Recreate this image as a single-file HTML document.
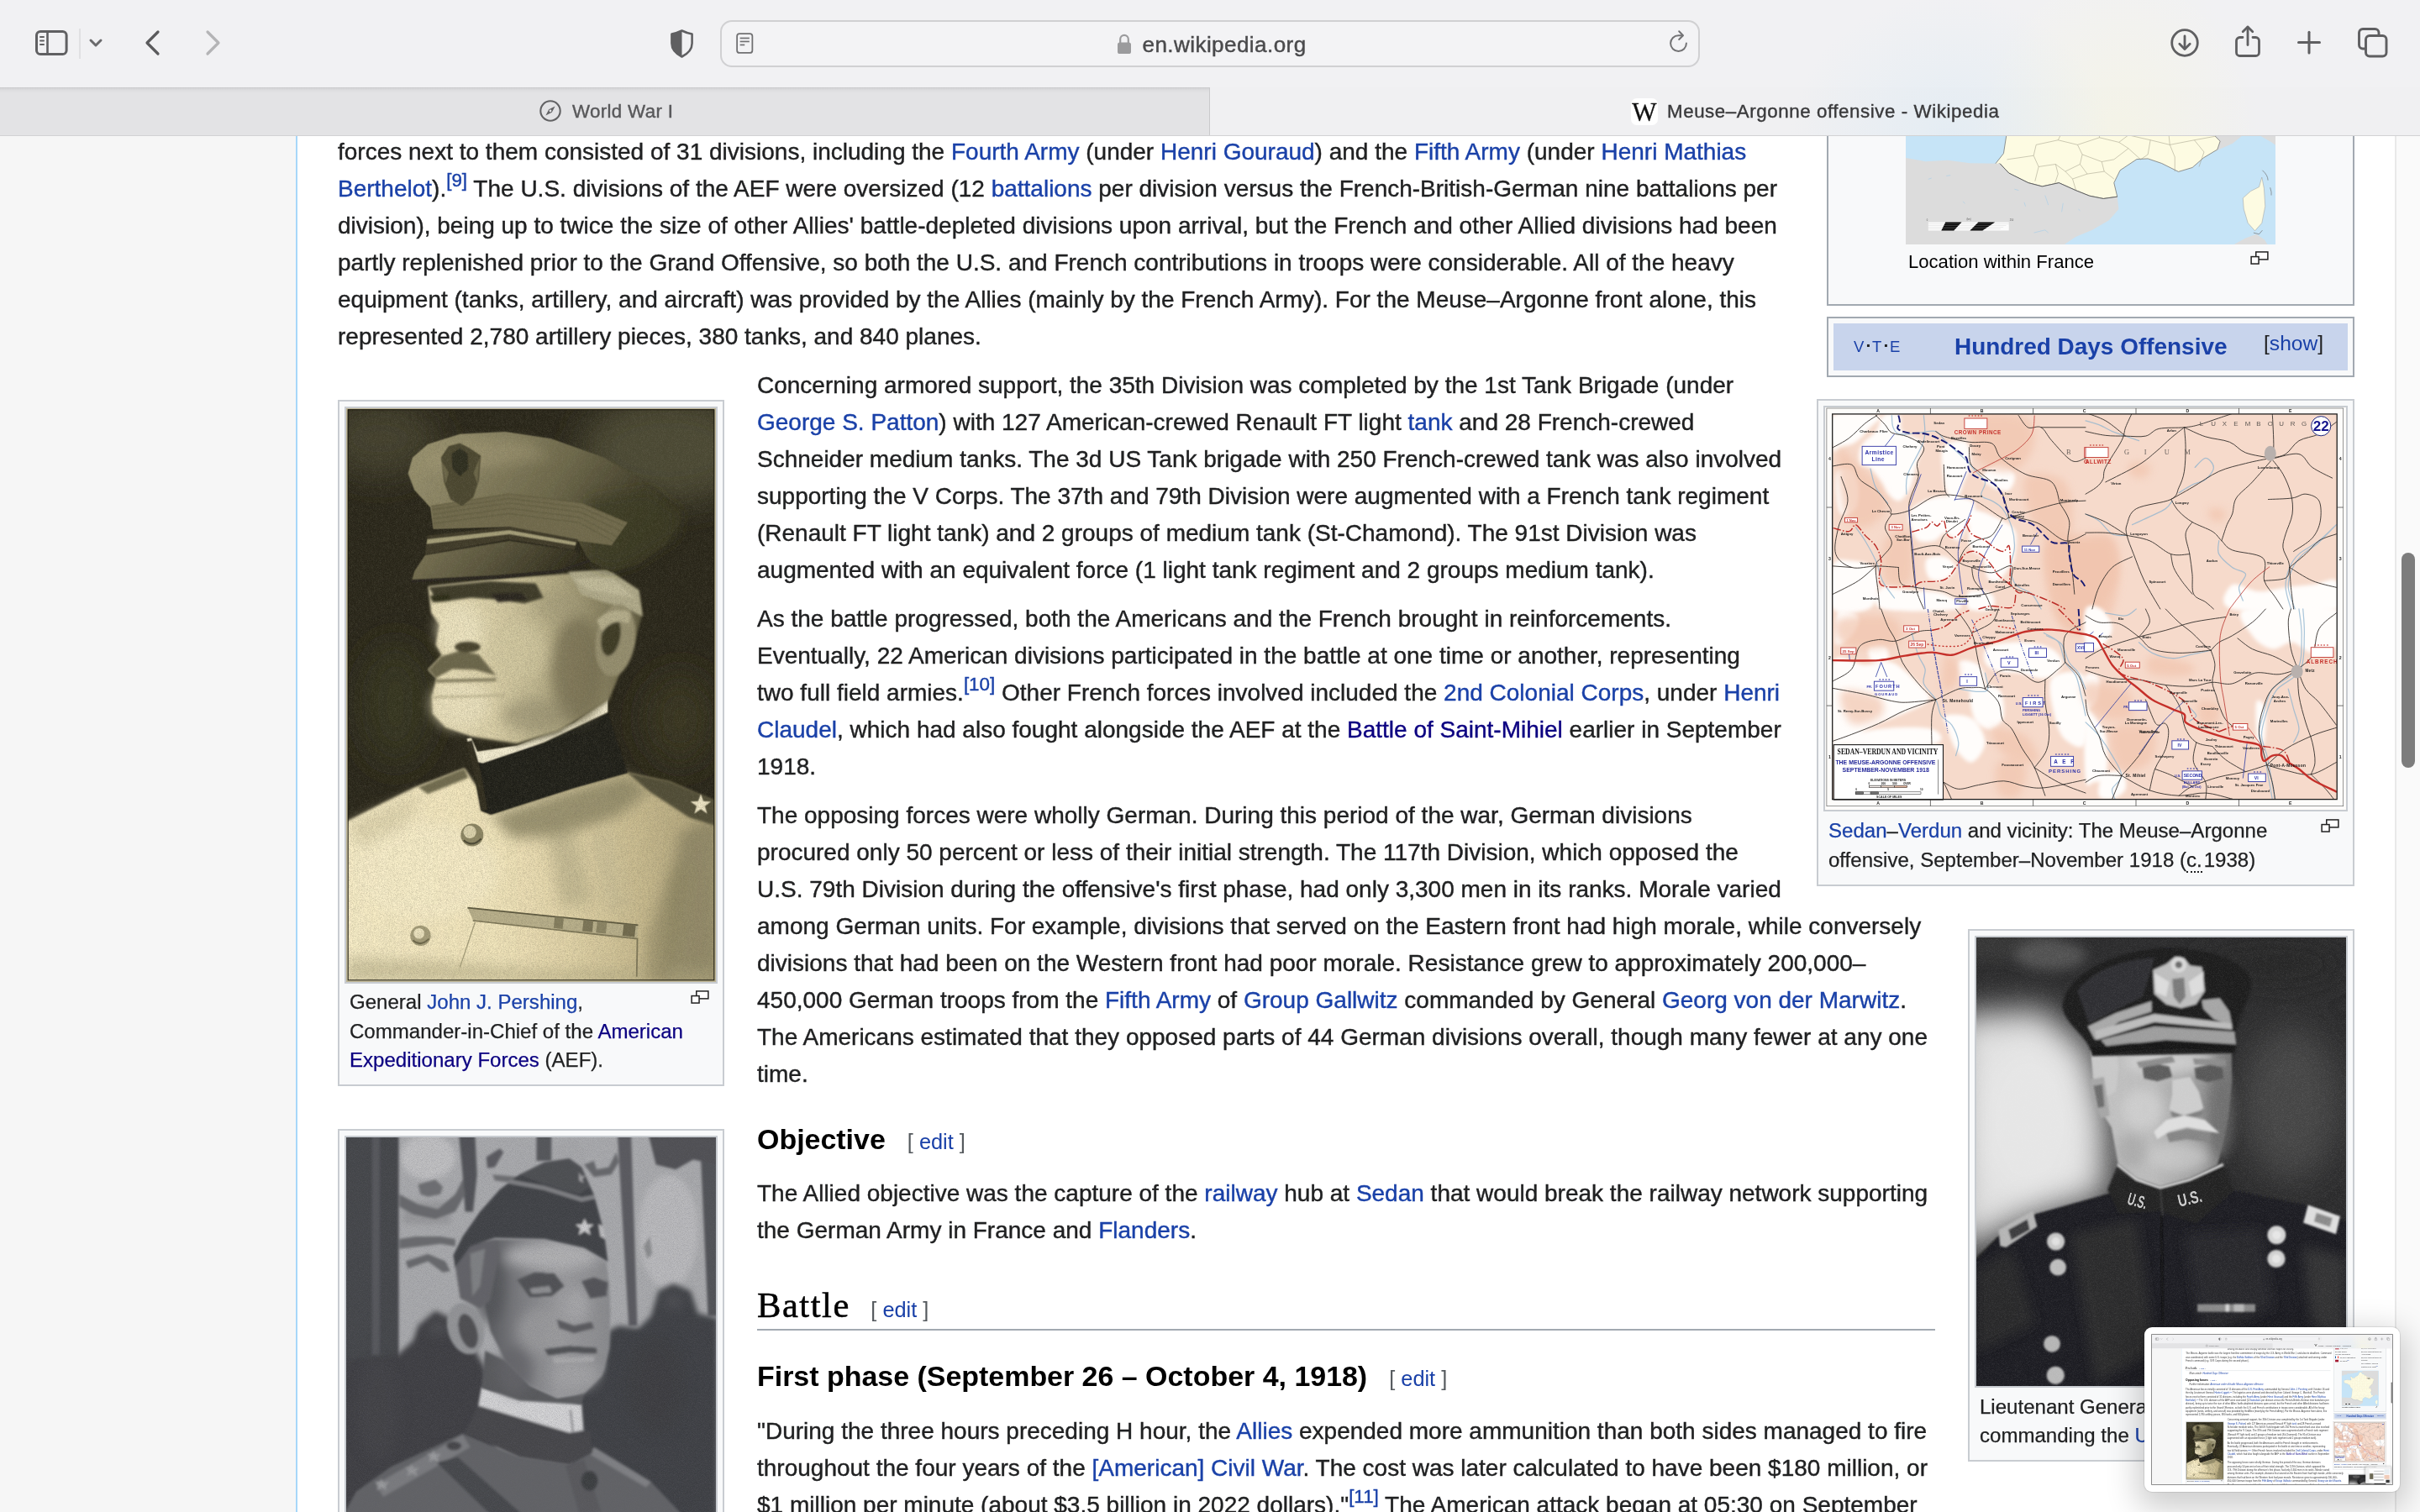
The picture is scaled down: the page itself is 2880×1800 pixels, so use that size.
<!DOCTYPE html>
<html lang="en"><head><meta charset="utf-8"><title>Meuse–Argonne offensive - Wikipedia</title>
<style>
*{box-sizing:border-box}
html,body{margin:0;padding:0}
body{width:2880px;height:1800px;overflow:hidden;position:relative;background:#fff;font-family:"Liberation Sans",Arial,Helvetica,sans-serif;color:#202122;-webkit-font-smoothing:antialiased}
a{color:#1a41a8;text-decoration:none}
a.v{color:#0b0080}
.abs{position:absolute}
/* ---------- browser chrome ---------- */
.toolbar{will-change:transform;position:absolute;left:0;top:0;width:2880px;height:104px;background:radial-gradient(ellipse 190px 170px at 2320px 165px,rgba(200,228,246,.3),rgba(200,228,246,0) 100%),radial-gradient(ellipse 170px 210px at 2520px 165px,rgba(250,248,215,.42),rgba(250,248,215,0) 100%),#f1f1f3;z-index:20}
.tabbar{will-change:transform;position:absolute;left:0;top:104px;width:2880px;height:58px;background:radial-gradient(ellipse 190px 170px at 2320px 61px,rgba(200,228,246,.3),rgba(200,228,246,0) 100%),radial-gradient(ellipse 170px 210px at 2520px 61px,rgba(250,248,215,.42),rgba(250,248,215,0) 100%),#f0f0f2;z-index:20;border-bottom:1px solid #d2d2d4}
.tab1{position:absolute;left:0;top:0;width:1440px;height:57px;background:linear-gradient(#c6c6c8 0,#d6d6d8 1.5px,#dfdfe1 4px,#e3e3e5 7px);border-right:1px solid #cacacc}
.tabtxt{position:absolute;font-size:22.3px;line-height:30px;white-space:nowrap;-webkit-text-stroke:.4px}
.url{position:absolute;left:857px;top:24px;width:1166px;height:56px;border:2px solid #d0d0d2;border-radius:14px;background:#f3f3f5}
.urltxt{position:absolute;left:1359.5px;top:35.2px;font-size:26px;line-height:36px;color:#4a4a4c;white-space:nowrap;letter-spacing:.45px;-webkit-text-stroke:.45px}
.ic{position:absolute;overflow:visible}
/* ---------- page ---------- */
.page{will-change:transform;position:absolute;left:0;top:0;width:2880px;height:1800px;overflow:hidden;background:#fff}
.leftpanel{position:absolute;left:0;top:-1000px;width:352px;height:4000px;background:#f6f6f6}
.leftline{position:absolute;left:352px;top:-1000px;width:2px;height:4000px;background:#a7d7f9}
.sbtrack{position:absolute;left:2850px;top:-1000px;width:30px;height:4000px;background:#fafafa;border-left:2px solid #e9e9e9}
.sbthumb{position:absolute;left:2858px;width:16px;height:256px;border-radius:8px;background:#7d7d7d}
.p{margin-top:3px;position:absolute;font-size:28px;line-height:44px;white-space:nowrap;color:#202122;-webkit-text-stroke:.4px}
.p sup{font-size:22.4px;line-height:1;vertical-align:baseline;position:relative;top:-12px}
.cap{-webkit-text-stroke:.25px;position:absolute;font-size:24.06px;line-height:34.6px;white-space:nowrap;color:#202122}
.thumb{position:absolute;background:#f8f9fa;border:2px solid #c8ccd1}
.img{position:absolute;border:2px solid #c8ccd1;overflow:hidden}
.img svg{position:absolute;left:0;top:0;display:block}
.h3{position:absolute;font-size:33.95px;font-weight:bold;line-height:54px;color:#000;white-space:nowrap}
.h2{position:absolute;font-family:"Liberation Serif","DejaVu Serif",serif;font-size:42.5px;line-height:55px;color:#000;white-space:nowrap;letter-spacing:1.55px;-webkit-text-stroke:.55px #000}
.ed{font-family:"Liberation Sans",Arial,sans-serif;font-weight:normal;font-size:25.35px;color:#54595d;margin-left:26px;letter-spacing:0;-webkit-text-stroke:0;position:relative;top:-.5px}
.mag{position:absolute;width:22px;height:16px}
.h2 .ed{margin-left:24.5px}
.view{position:absolute;left:0;top:0;width:2880px;height:1800px;overflow:hidden;background:#fff}
.doc{position:absolute;left:0;width:2880px;height:0}
.preview{position:absolute;left:2552px;top:1580px;width:304px;height:196px;background:#fff;border-radius:9px;box-shadow:0 0 1px 1px rgba(0,0,0,.10),0 12px 38px 8px rgba(0,0,0,.2);z-index:30}
.pvin{position:absolute;left:8.6px;top:8.6px;width:286.8px;height:178.4px;overflow:hidden;box-shadow:0 0 0 .8px #707070}
.pvin .view{transform:scale(.09958);transform-origin:0 0}
.npv{position:absolute;left:2552px;top:1580px;width:304px;height:196px;background:#fff;border-radius:9px;box-shadow:0 0 30px rgba(0,0,0,.3);z-index:30;overflow:hidden}
.p .ln{display:block}
.cap .ln{display:block}
.pvin .p,.pvin .cap,.pvin .tabtxt,.pvin .urltxt,.pvin .h2{-webkit-text-stroke:0}
.pvin .p,.pvin .cap{color:#3a3a3c}
</style></head>
<body>
<div class="page view">
<div class="doc" style="top:0">
<div class="leftpanel"></div><div class="leftline"></div>
<div class="sbtrack"></div>

<!-- infobox -->
<div class="abs" style="left:2174px;top:-700px;width:628px;height:1064px;background:#f8f9fa;border:2px solid #a2a9b1"></div>
<div class="abs" style="left:2268px;top:-130px;width:440px;height:421px;overflow:hidden;background:#c6e4f6"><svg width="440" height="421" viewBox="569 -847 1330 1274" preserveAspectRatio="none" style="position:absolute;left:0;top:0"><g id="A_france">
<defs><clipPath id="frclip"><path d="M1260,-796 L1200,-780 L1178,-701 L1135,-659 L1058,-629 L1050,-598 L1015,-580 L947,-586 L929,-629 L878,-629 L904,-568 L912,-501 L869,-501 L784,-519 L698,-507 L633,-471 L672,-434 L646,-422 L672,-398 L749,-386 L826,-337 L861,-325 L869,-277 L912,-216 L947,-192 L947,-131 L938,-10 L921,99 L888,141 L908,136 L940,170 L1010,205 L1060,218 L1120,205 L1180,232 L1230,252 L1280,262 L1330,255 L1318,205 L1340,160 L1400,120 L1440,118 L1490,135 L1550,165 L1600,150 L1640,115 L1690,85 L1700,55 L1680,35 L1642,27 L1633,-22 L1612,-70 L1642,-119 L1624,-168 L1624,-228 L1564,-204 L1564,-246 L1633,-337 L1689,-368 L1693,-434 L1745,-538 L1676,-562 L1590,-598 L1539,-610 L1457,-641 L1457,-683 L1401,-663 L1397,-701 L1316,-726 L1290,-756 L1260,-796 Z"/></clipPath></defs>
<rect x="569" y="-847" width="1330" height="1274" fill="#c6e4f7"/>
<path d="M569,-671 L612,-665 L689,-707 L741,-695 L784,-750 L835,-732 L929,-738 L1032,-762 L1118,-774 L1161,-805 L1161,-847 L569,-847 Z" fill="#dcdcdc"/>
<path d="M1260,-796 L1324,-829 L1350,-847 L1899,-847 L1899,69 L1882,57 L1805,14 L1745,63 L1684,90 L1680,35 L1500,-300 L1400,-700 Z" fill="#dcdcdc"/>
<path d="M1260,-796 L1200,-780 L1178,-701 L1135,-659 L1058,-629 L1050,-598 L1015,-580 L947,-586 L929,-629 L878,-629 L904,-568 L912,-501 L869,-501 L784,-519 L698,-507 L633,-471 L672,-434 L646,-422 L672,-398 L749,-386 L826,-337 L861,-325 L869,-277 L912,-216 L947,-192 L947,-131 L938,-10 L921,99 L888,141 L908,136 L940,170 L1010,205 L1060,218 L1120,205 L1180,232 L1230,252 L1280,262 L1330,255 L1318,205 L1340,160 L1400,120 L1440,118 L1490,135 L1550,165 L1600,150 L1640,115 L1690,85 L1700,55 L1680,35 L1642,27 L1633,-22 L1612,-70 L1642,-119 L1624,-168 L1624,-228 L1564,-204 L1564,-246 L1633,-337 L1689,-368 L1693,-434 L1745,-538 L1676,-562 L1590,-598 L1539,-610 L1457,-641 L1457,-683 L1401,-663 L1397,-701 L1316,-726 L1290,-756 L1260,-796 Z" fill="#fdfbe2" stroke="#6d6d6d" stroke-width="2.2" stroke-linejoin="round"/>
<g clip-path="url(#frclip)" fill="none" stroke="#b5b19c" stroke-width="1.6"><path d="M648,-641 L695,-644 L729,-659 L794,-683 L833,-648 L870,-651 L904,-641 L948,-691 L1006,-684 L1049,-646 L1079,-673 L1133,-687 L1179,-640 L1215,-675 L1256,-645 L1298,-640 L1352,-687 L1385,-653 L1438,-669 L1480,-686 L1513,-660 L1558,-661 L1590,-653 L1650,-637 L1673,-673 L1722,-667"/><path d="M654,-558 L711,-549 L738,-550 L787,-554 L823,-583 L865,-571 L923,-544 L944,-551 L1005,-575 L1034,-558 L1076,-565 L1115,-580 L1180,-596 L1219,-596 L1243,-555 L1310,-585 L1339,-595 L1387,-587 L1422,-549 L1469,-546 L1510,-596 L1551,-538 L1587,-548 L1649,-560 L1679,-543 L1740,-563"/><path d="M647,-444 L686,-451 L745,-450 L772,-470 L820,-501 L860,-473 L919,-465 L968,-470 L991,-465 L1029,-466 L1077,-494 L1135,-471 L1158,-456 L1206,-453 L1249,-493 L1289,-444 L1352,-475 L1397,-465 L1437,-480 L1477,-486 L1513,-446 L1548,-494 L1609,-497 L1637,-480 L1692,-480 L1735,-473"/><path d="M659,-385 L692,-399 L752,-348 L796,-402 L831,-346 L880,-351 L924,-384 L944,-354 L1002,-378 L1047,-400 L1077,-344 L1138,-344 L1179,-350 L1221,-391 L1265,-377 L1308,-356 L1346,-364 L1394,-390 L1426,-375 L1458,-346 L1515,-373 L1565,-380 L1589,-365 L1648,-375 L1672,-394 L1736,-349"/><path d="M656,-270 L705,-265 L734,-276 L796,-252 L816,-284 L879,-277 L911,-298 L962,-250 L1008,-258 L1036,-297 L1082,-295 L1118,-299 L1161,-255 L1212,-267 L1257,-301 L1304,-247 L1336,-279 L1384,-290 L1427,-251 L1463,-298 L1509,-293 L1568,-284 L1603,-283 L1637,-302 L1684,-302 L1722,-299"/><path d="M662,-187 L696,-158 L748,-171 L788,-157 L816,-158 L877,-160 L923,-172 L957,-171 L1001,-155 L1038,-206 L1076,-189 L1122,-168 L1157,-151 L1224,-200 L1263,-198 L1310,-159 L1343,-179 L1386,-206 L1434,-208 L1460,-189 L1517,-195 L1559,-200 L1594,-206 L1639,-186 L1695,-192 L1722,-163"/><path d="M650,-90 L710,-107 L738,-77 L792,-69 L824,-53 L861,-85 L917,-90 L952,-110 L1001,-62 L1030,-111 L1096,-108 L1129,-71 L1159,-68 L1205,-109 L1266,-99 L1289,-67 L1336,-110 L1375,-100 L1432,-85 L1482,-68 L1513,-62 L1545,-54 L1594,-60 L1630,-112 L1679,-106 L1733,-97"/><path d="M792,-786 L807,-726 L803,-665 L795,-604 L787,-544 L793,-483 L795,-422 L786,-362 L784,-301 L766,-240 L801,-180 L783,-119"/><path d="M847,-786 L852,-726 L889,-665 L857,-604 L864,-544 L879,-483 L888,-422 L860,-362 L863,-301 L865,-240 L845,-180 L889,-119"/><path d="M930,-786 L979,-726 L937,-665 L937,-604 L973,-544 L972,-483 L941,-422 L958,-362 L954,-301 L966,-240 L939,-180 L972,-119"/><path d="M1066,-786 L1052,-726 L1063,-665 L1063,-604 L1035,-544 L1059,-483 L1058,-422 L1045,-362 L1021,-301 L1047,-240 L1062,-180 L1031,-119"/><path d="M1134,-786 L1147,-726 L1132,-665 L1103,-604 L1134,-544 L1114,-483 L1145,-422 L1135,-362 L1117,-301 L1147,-240 L1133,-180 L1118,-119"/><path d="M1230,-786 L1233,-726 L1233,-665 L1232,-604 L1221,-544 L1223,-483 L1218,-422 L1214,-362 L1238,-301 L1205,-240 L1191,-180 L1224,-119"/><path d="M1298,-786 L1301,-726 L1303,-665 L1285,-604 L1283,-544 L1276,-483 L1313,-422 L1319,-362 L1308,-301 L1279,-240 L1323,-180 L1315,-119"/><path d="M1385,-786 L1358,-726 L1402,-665 L1391,-604 L1390,-544 L1359,-483 L1396,-422 L1360,-362 L1383,-301 L1366,-240 L1377,-180 L1404,-119"/><path d="M1483,-786 L1486,-726 L1460,-665 L1464,-604 L1475,-544 L1446,-483 L1465,-422 L1494,-362 L1483,-301 L1489,-240 L1460,-180 L1480,-119"/><path d="M1571,-786 L1566,-726 L1553,-665 L1539,-604 L1531,-544 L1576,-483 L1578,-422 L1544,-362 L1569,-301 L1551,-240 L1562,-180 L1573,-119"/><path d="M1632,-786 L1648,-726 L1629,-665 L1642,-604 L1617,-544 L1629,-483 L1631,-422 L1663,-362 L1623,-301 L1655,-240 L1620,-180 L1667,-119"/></g>
<g fill="none" stroke="#a09c88" stroke-width="1.6" stroke-linejoin="round"><polyline points="933,121 1029,107 1047,147 1034,199"/><polyline points="1029,107 1038,68 1117,51 1126,33 1121,-37"/><polyline points="1047,147 1108,138 1117,173 1104,212"/><polyline points="1117,51 1187,68 1204,103 1196,138 1143,164 1108,138"/><polyline points="1187,68 1266,42 1336,59 1370,33 1379,-28"/><polyline points="1204,103 1274,129 1318,121 1370,81 1336,59"/><polyline points="1196,138 1222,173 1283,164 1274,129"/><polyline points="1143,164 1169,191 1222,173"/><polyline points="1169,191 1182,234"/><polyline points="1283,164 1318,191"/><polyline points="1370,81 1414,121"/><polyline points="1370,33 1449,51 1440,103 1414,121"/><polyline points="1449,51 1519,68 1537,112 1537,164"/><polyline points="1519,68 1607,51 1642,94 1624,147"/><polyline points="1607,51 1685,37"/><polyline points="1266,42 1257,-28"/><polyline points="1519,68 1510,-20"/></g>
<!-- Spain / Andorra -->
<path d="M569,115 L640,128 L720,124 L800,134 L908,136 L940,170 L1010,205 L1060,218 L1120,205 L1180,232 L1230,252 L1280,262 L1330,255 L1335,300 L1300,340 L1240,375 L1180,400 L1140,427 L569,427 Z" fill="#dcdcdc"/>
<path d="M908,136 L940,170 L1010,205 L1060,218 L1120,205 L1180,232 L1230,252 L1280,262 L1330,255" fill="none" stroke="#5f5f5f" stroke-width="3"/>
<path d="M1750,427 L1790,405 L1830,390 L1860,410 L1870,427 Z" fill="#dcdcdc"/>
<path d="M1850,185 L1858,225 L1862,290 L1850,350 L1825,378 L1800,350 L1785,300 L1782,260 L1810,235 L1840,220 Z" fill="#fdfbe2" stroke="#9a9a9a" stroke-width="1.5"/>
<path d="M1852,160 Q1872,178 1872,196 M1880,222 Q1886,240 1884,250 M1820,385 L1840,390 L1852,376" fill="none" stroke="#6d6d6d" stroke-width="2"/>
<g fill="none" stroke="#a9cfe8" stroke-width="2"><polyline points="650,192 662,188"/><polyline points="715,180 730,178"/><polyline points="960,228 975,232"/><polyline points="1070,250 1082,285"/><polyline points="1135,278 1130,310"/><polyline points="995,275 1000,290"/><polyline points="1030,385 1070,375 1082,385"/><polyline points="1190,300 1196,305"/><polyline points="775,272 782,280"/></g>
<g>
 <rect x="650" y="347" width="290" height="30" fill="#fff" opacity=".9"/>
 <polygon points="712,347 770,347 742,377 697,377" fill="#000"/>
 <polygon points="830,347 890,347 845,377 800,377" fill="#000"/>
 <g stroke="#c9c9c9" stroke-width="1"><line x1="650" y1="353" x2="940" y2="353"/><line x1="650" y1="359" x2="930" y2="359"/><line x1="650" y1="365" x2="920" y2="365"/><line x1="650" y1="371" x2="910" y2="371"/></g>
 <g font-family="'Liberation Sans',sans-serif" font-size="8" fill="#555"><text x="644" y="342">0</text><text x="788" y="339">(km)</text><text x="943" y="342">250</text></g>
</g>
<!-- location marker + label -->
<circle cx="1479" cy="-580" r="9" fill="#d33"/>
<text x="1493" y="-574" font-family="'Liberation Sans',sans-serif" font-size="30" fill="#222">Meuse-</text>
<text x="1493" y="-540" font-family="'Liberation Sans',sans-serif" font-size="30" fill="#222">Argonne</text>
</g></svg></div>
<div class="abs" style="left:2271px;top:295px;font-size:22.1px;line-height:34px;color:#000;white-space:nowrap">Location within France</div>
<svg class="mag" style="left:2678px;top:299px" viewBox="0 0 23 17"><rect x="7" y="1" width="15" height="9.5" fill="#fff" stroke="#222" stroke-width="1.6"/><rect x="1" y="7" width="9.5" height="9" fill="#fff" stroke="#222" stroke-width="1.6"/></svg>

<!-- navbox -->
<div class="abs" style="left:2174px;top:377px;width:628px;height:72px;background:#f8f9fa;border:2px solid #a2a9b1"></div>
<div class="abs" style="left:2182px;top:385px;width:612px;height:56px;background:#c8d4ec"></div>
<div class="abs" style="left:2206px;top:399px;font-size:18.5px;line-height:26px;white-space:nowrap;letter-spacing:2.2px;color:#202122"><a>V</a><b style="font-size:21px;position:relative;top:-1.5px;letter-spacing:.5px">·</b><a>T</a><b style="font-size:21px;position:relative;top:-1.5px;letter-spacing:.5px">·</b><a>E</a></div>
<div class="abs" style="left:2326px;top:393.4px;font-size:27.95px;font-weight:bold;line-height:40px;white-space:nowrap"><a>Hundred Days Offensive</a></div>
<div class="abs" style="left:2694px;top:391px;font-size:24.64px;line-height:36px;white-space:nowrap;color:#202122">[<a>show</a>]</div>

<!-- paragraph 1 -->
<div class="p" style="left:402px;top:68px"><span class="ln">The American forces initially consisted of 15 divisions of the <a>U.S. First Army</a> commanded by General <a>John J. Pershing</a> until October 16 and</span><span class="ln">then by Lieutenant General <a>Hunter Liggett</a>.<sup><a>[8]</a></sup> The logistics were planned and directed by then Colonel George C. Marshall. The French</span><span class="ln">forces next to them consisted of 31 divisions, including the <a>Fourth Army</a> (under <a>Henri Gouraud</a>) and the <a>Fifth Army</a> (under <a>Henri Mathias</a></span><span class="ln"><a>Berthelot</a>).<sup><a>[9]</a></sup> The U.S. divisions of the AEF were oversized (12 <a>battalions</a> per division versus the French-British-German nine battalions per</span><span class="ln">division), being up to twice the size of other Allies' battle-depleted divisions upon arrival, but the French and other Allied divisions had been</span><span class="ln">partly replenished prior to the Grand Offensive, so both the U.S. and French contributions in troops were considerable. All of the heavy</span><span class="ln">equipment (tanks, artillery, and aircraft) was provided by the Allies (mainly by the French Army). For the Meuse–Argonne front alone, this</span><span class="ln">represented 2,780 artillery pieces, 380 tanks, and 840 planes.</span></div>

<!-- thumb 1 : Pershing -->
<div class="thumb" style="left:402px;top:476px;width:460px;height:817px"></div>
<div class="img" style="left:410px;top:484px;width:444px;height:687px;background:#3b3a2b"><svg width="440" height="683" viewBox="0 0 975 1514" preserveAspectRatio="none"><g id="A_pershing">
<defs>
<filter id="pb1" x="-30%" y="-30%" width="160%" height="160%"><feGaussianBlur stdDeviation="16"/></filter>
<filter id="pb2" x="-30%" y="-30%" width="160%" height="160%"><feGaussianBlur stdDeviation="7"/></filter>
<filter id="pb3" x="-30%" y="-30%" width="160%" height="160%"><feGaussianBlur stdDeviation="3"/></filter>
<filter id="pb4" x="-30%" y="-30%" width="160%" height="160%"><feGaussianBlur stdDeviation="1.4"/></filter>
<filter id="pbig" x="-50%" y="-50%" width="200%" height="200%"><feGaussianBlur stdDeviation="45"/></filter>
<filter id="pgrain" x="0" y="0" width="100%" height="100%"><feTurbulence type="fractalNoise" baseFrequency="0.85" numOctaves="2" seed="3" result="n"/><feColorMatrix in="n" type="matrix" values="0 0 0 0 0.12  0 0 0 0 0.11  0 0 0 0 0.07  1.6 1.6 1.6 0 -2.0"/></filter>
<filter id="pgrain2" x="0" y="0" width="100%" height="100%"><feTurbulence type="fractalNoise" baseFrequency="0.85" numOctaves="2" seed="11" result="n"/><feColorMatrix in="n" type="matrix" values="0 0 0 0 0.98  0 0 0 0 0.95  0 0 0 0 0.8  1.6 1.6 1.6 0 -2.05"/></filter>
<clipPath id="pclip"><rect x="4" y="3" width="967" height="1507"/></clipPath>
<linearGradient id="puni" x1="0" y1="0" x2="1" y2="0"><stop offset="0" stop-color="#f8edc8"/><stop offset=".42" stop-color="#f2e5bb"/><stop offset=".62" stop-color="#e0d2a6"/><stop offset=".8" stop-color="#c7b98d"/><stop offset="1" stop-color="#ab9f77"/></linearGradient>
<linearGradient id="phat" x1="0" y1="0" x2="1" y2="0.35"><stop offset="0" stop-color="#9d9672"/><stop offset=".3" stop-color="#878060"/><stop offset=".6" stop-color="#6b6648"/><stop offset=".85" stop-color="#45412c"/><stop offset="1" stop-color="#322f1d"/></linearGradient>
<linearGradient id="pface" x1="0" y1="0" x2="1" y2="0"><stop offset="0" stop-color="#eae0ba"/><stop offset=".3" stop-color="#dcd1a9"/><stop offset=".6" stop-color="#b3aa83"/><stop offset=".85" stop-color="#827b5b"/><stop offset="1" stop-color="#5d583e"/></linearGradient>
<linearGradient id="pvis" x1="0" y1="0" x2="1" y2="0.2"><stop offset="0" stop-color="#7f7858"/><stop offset=".5" stop-color="#59543b"/><stop offset="1" stop-color="#2a2718"/></linearGradient>
</defs>
<rect x="0" y="0" width="975" height="1514" fill="#bdb596"/>
<rect x="4" y="3" width="967" height="1507" fill="#262317"/>
<g clip-path="url(#pclip)">
 <g filter="url(#pbig)">
  <ellipse cx="850" cy="110" rx="230" ry="140" fill="#4a4733"/>
  <ellipse cx="90" cy="80" rx="150" ry="100" fill="#3f3c2a"/>
  <ellipse cx="130" cy="780" rx="90" ry="160" fill="#33301f"/>
  <ellipse cx="880" cy="820" rx="90" ry="120" fill="#34311f"/>
 </g>
 <!-- uniform -->
 <g filter="url(#pb3)">
  <path d="M-10,1096 L100,1040 L182,1000 L312,950 L345,1000 L356,1062 L382,1072 L600,1002 L742,962 L852,986 L985,1044 L985,1530 L-10,1530 Z" fill="url(#puni)"/>
 </g>
 <g filter="url(#pb1)">
  <path d="M382,1075 L600,1004 L745,966 L800,1010 L720,1075 L560,1130 L440,1135 Z" fill="#8d8665" opacity=".85"/>
  <ellipse cx="210" cy="1220" rx="190" ry="130" fill="#faf0cc" opacity=".7"/>
  <path d="M880,1120 L980,1080 L980,1520 L830,1520 L850,1300 Z" fill="#8b8362" opacity=".8"/>
  <path d="M530,1130 L600,1110 L650,1300 L570,1320 Z" fill="#b9b08a" opacity=".7"/>
  <path d="M640,1130 L700,1100 L740,1320 L690,1330 Z" fill="#c6bc95" opacity=".5"/>
  <path d="M0,1450 L250,1460 L500,1480 L975,1480 L975,1514 L0,1514 Z" fill="#b0a782" opacity=".55"/>
  <path d="M0,1100 L120,1045 L200,1010 L160,1100 L40,1160 Z" fill="#d9cfa8" opacity=".7"/>
  <path d="M790,1400 L860,1200 L900,1220 L850,1514 L790,1514 Z" fill="#8d8563" opacity=".6"/>
 </g>
 <!-- shoulder straps -->
 <g filter="url(#pb3)">
  <path d="M742,962 L852,984 L985,1040 L985,1105 L905,1080 L800,1012 Z" fill="#504c36"/>
  <path d="M190,1000 L312,950 L322,975 L215,1018 Z" fill="#6f6a4e"/>
 </g>
 <polygon filter="url(#pb4)" points="935,1018 942,1037 962,1038 946,1050 952,1070 935,1058 918,1070 924,1050 908,1038 928,1037" fill="#efe6c6"/>
 <!-- collar -->
 <g filter="url(#pb4)">
  <path d="M336,935 L520,884 L690,804 L742,962 L600,1002 L382,1072 L356,1062 L344,1000 Z" fill="#1e1c12"/>
  <path d="M318,872 L334,930 L360,936 L520,882 L690,802 L690,764 L600,830 L450,890 L346,906 L330,870 Z" fill="#f4edd2"/>
  <path d="M316,880 L330,935 L346,1002 L358,1062 L372,1058 L360,990 L348,930 L332,876 Z" fill="#2f2c1c"/>
 </g>
 <path d="M330,868 L450,888 L560,856 L690,768 L700,700 L560,800 L400,845 Z" fill="#4f4b35" filter="url(#pb2)"/>
 <!-- face -->
 <g filter="url(#pb3)">
  <path d="M216,470 L380,452 L560,438 L690,428 L770,482 L780,545 L760,620 L722,700 L692,770 L560,850 L450,884 L330,866 L262,842 L228,806 L226,760 L238,712 L216,690 L252,652 L236,624 L246,572 L224,540 Z" fill="url(#pface)"/>
 </g>
 <g filter="url(#pb1)">
  <ellipse cx="300" cy="585" rx="60" ry="70" fill="#eee5c2" opacity=".9"/>
  <ellipse cx="300" cy="780" rx="75" ry="65" fill="#ece3bf" opacity=".95"/>
  <ellipse cx="450" cy="640" rx="80" ry="80" fill="#d4caa2" opacity=".7"/>
  <ellipse cx="610" cy="690" rx="70" ry="140" fill="#6f694c" opacity=".7"/>
  <ellipse cx="500" cy="810" rx="90" ry="45" fill="#8e876a" opacity=".55"/>
  <ellipse cx="560" cy="520" rx="60" ry="40" fill="#a39b78" opacity=".6"/>
 </g>
 <g filter="url(#pb3)">
  <path d="M585,432 L690,426 L772,480 L782,550 L740,528 L680,512 L620,492 Z" fill="#b1ab8b"/>
  <path d="M600,450 L700,445 L760,500 L700,490 L640,480 Z" fill="#c9c3a2" opacity=".7"/>
  <ellipse cx="710" cy="612" rx="52" ry="96" fill="#958e6e" transform="rotate(8 710 612)"/>
  <ellipse cx="698" cy="602" rx="25" ry="52" fill="#3a3724" transform="rotate(10 698 602)"/>
  <path d="M660,560 Q700,520 750,540 L745,570 Q705,550 675,590 Z" fill="#b5ae8c"/>
 </g>
 <g filter="url(#pb3)">
  <path d="M218,472 L380,456 L500,462 L520,500 L470,515 L400,505 L330,500 L240,512 Z" fill="#3b3825"/>
  <path d="M380,490 L460,486 L480,505 L400,512 Z" fill="#26241a"/>
  <path d="M220,495 L270,490 L275,508 L228,512 Z" fill="#2b2919"/>
  <path d="M216,690 L250,655 L300,640 L350,650 L395,705 L340,690 L280,688 L236,712 Z" fill="#6a654a"/>
  <ellipse cx="320" cy="630" rx="34" ry="14" fill="#45412c"/>
  <path d="M236,716 L395,712 L395,720 L236,724 Z" fill="#7f785a"/>
  <path d="M228,760 L420,755 L420,760 L228,765 Z" fill="#b9b08c"/>
 </g>
 <!-- hat -->
 <g filter="url(#pb4)">
  <path d="M163,172 L175,130 L215,95 L300,68 L420,62 L540,80 L680,130 L800,200 L886,266 L880,302 L840,362 L770,412 L700,432 L640,402 L612,350 L430,312 L230,318 L222,262 L180,216 Z" fill="url(#phat)"/>
 </g>
 <g filter="url(#pb1)">
  <path d="M640,240 L800,215 L880,275 L870,340 L760,410 L690,430 L640,400 Z" fill="#3a3723" opacity=".8"/>
  <path d="M180,150 L300,85 L470,85 L540,130 L300,170 Z" fill="#aaa27c" opacity=".45"/>
 </g>
 <g filter="url(#pb4)">
  <path d="M224,258 L430,226 L620,250 L742,302 L700,362 L612,350 L430,312 L230,318 Z" fill="#6f694b"/>
  <g stroke="#5e583c" stroke-width="2.5" fill="none" opacity=".8"><path d="M226,268 L430,238 L620,262 L735,312"/><path d="M228,280 L430,250 L618,274 L725,325"/><path d="M229,292 L430,264 L616,288 L715,340"/><path d="M230,304 L430,278 L614,302 L706,352"/><path d="M225,258 L430,226 L620,250 L742,302"/></g>
  <path d="M214,336 L430,312 L612,346 L602,374 L430,346 L208,386 Z" fill="#3c3926"/>
  <path d="M214,346 L430,322 L606,354 L604,362 L430,332 L212,358 Z" fill="#a69f79"/>
  <path d="M208,388 L430,350 L602,376 L642,402 L562,432 L400,446 L172,458 L180,430 Z" fill="url(#pvis)"/>
  <path d="M172,452 L400,440 L562,426 L642,398 L644,406 L562,434 L400,450 L172,460 Z" fill="#26241a"/>
  <path d="M250,130 L270,100 L300,92 L325,105 L355,125 L350,190 L335,235 L305,258 L275,240 L258,195 Z" fill="#49442d"/>
  <path d="M278,120 L300,105 L320,120 L322,160 L300,180 L280,160 Z" fill="#2c291a"/>
  <path d="M252,140 L270,170 L262,200 Z M352,130 L336,170 L346,200 Z" fill="#6b6546"/>
 </g>
 <!-- buttons, ribbon, pocket -->
 <g filter="url(#pb4)">
  <circle cx="332" cy="1126" r="30" fill="#8d8664"/><circle cx="326" cy="1118" r="17" fill="#ddd4ae"/><path d="M310,1140 Q332,1160 356,1136" stroke="#4a4630" stroke-width="5" fill="none"/>
  <circle cx="196" cy="1392" r="27" fill="#a59d79"/><circle cx="192" cy="1386" r="14" fill="#ece3bf"/><path d="M176,1404 Q196,1422 218,1400" stroke="#6a6447" stroke-width="4" fill="none"/>
  <path d="M320,1318 L770,1364 L768,1398 L334,1350 Z" fill="#b8af8a"/>
  <path d="M320,1318 L770,1364" stroke="#5a553b" stroke-width="4" fill="none"/>
  <path d="M334,1352 L768,1400 L766,1500" stroke="#7d7657" stroke-width="4" fill="none"/>
  <path d="M300,1475 L340,1356" stroke="#a59d79" stroke-width="3" fill="none"/>
  <rect x="550" y="1342" width="24" height="30" fill="#847d5d" transform="rotate(6 550 1342)"/>
  <rect x="626" y="1350" width="26" height="30" fill="#7a7354" transform="rotate(6 626 1350)"/>
  <rect x="662" y="1354" width="26" height="30" fill="#8a8362" transform="rotate(6 662 1354)"/>
  <rect x="732" y="1360" width="32" height="32" fill="#6f694c" transform="rotate(6 732 1360)"/>
 </g>
 <rect x="6" y="5" width="962" height="1502" filter="url(#pgrain)" opacity=".2"/>
 <rect x="6" y="5" width="962" height="1502" filter="url(#pgrain2)" opacity=".05"/>
</g>
<rect x="5" y="4" width="965" height="1505" fill="none" stroke="#1c1a10" stroke-width="2"/>
</g></svg></div>
<div class="cap" style="left:416px;top:1176px"><span class="ln">General <a>John J. Pershing</a>,</span><span class="ln">Commander-in-Chief of the <a class="v">American</a></span><span class="ln"><a class="v">Expeditionary Forces</a> (AEF).</span></div>
<svg class="mag" style="left:822px;top:1179px" viewBox="0 0 23 17"><rect x="7" y="1" width="15" height="9.5" fill="#fff" stroke="#222" stroke-width="1.6"/><rect x="1" y="7" width="9.5" height="9" fill="#fff" stroke="#222" stroke-width="1.6"/></svg>

<!-- thumb 2 -->
<div class="thumb" style="left:402px;top:1344px;width:460px;height:520px"></div>
<div class="img" style="left:410px;top:1352px;width:444px;height:500px;background:#6f7074"><svg width="440" height="446" viewBox="0 0 1492 1512" preserveAspectRatio="none"><g id="A_general2">
<defs>
<filter id="gb1" x="-30%" y="-30%" width="160%" height="160%"><feGaussianBlur stdDeviation="24"/></filter>
<filter id="gb2" x="-30%" y="-30%" width="160%" height="160%"><feGaussianBlur stdDeviation="10"/></filter>
<filter id="gb3" x="-30%" y="-30%" width="160%" height="160%"><feGaussianBlur stdDeviation="5"/></filter>
<filter id="ggrain" x="0" y="0" width="100%" height="100%"><feTurbulence type="fractalNoise" baseFrequency="0.35" numOctaves="2" seed="8" result="n"/><feColorMatrix in="n" type="matrix" values="0 0 0 0 0.15  0 0 0 0 0.15  0 0 0 0 0.17  1.6 1.6 1.6 0 -2.0"/></filter>
<linearGradient id="gface" x1="0" y1="0" x2="1" y2="0"><stop offset="0" stop-color="#5c5d61"/><stop offset=".25" stop-color="#838488"/><stop offset=".6" stop-color="#acacaf"/><stop offset="1" stop-color="#98999c"/></linearGradient>
</defs>
<rect x="0" y="0" width="1492" height="1512" fill="#bcbdc0"/>
<g filter="url(#gb2)">
 <ellipse cx="330" cy="80" rx="110" ry="90" fill="#d6d6d8"/>
 <ellipse cx="1300" cy="380" rx="120" ry="230" fill="#cfcfd2"/>
 <ellipse cx="900" cy="60" rx="60" ry="50" fill="#b9babd"/>
 <ellipse cx="650" cy="330" rx="50" ry="60" fill="#cdced0"/>
 <rect x="230" y="260" width="190" height="90" fill="#a8a9ac"/>
</g>
<!-- ironwork / trunks -->
<g filter="url(#gb3)">
 <rect x="-20" y="-20" width="232" height="1560" fill="#47484d"/>
 <rect x="105" y="-20" width="30" height="900" fill="#5c5d62"/>
 <path d="M455,-10 L520,-10 L528,150 L512,300 L480,300 L470,150 Z" fill="#55565b"/>
 <rect x="768" y="-10" width="60" height="105" fill="#5a5b60"/>
 <path d="M1095,-10 L1150,-10 L1175,760 L1140,760 Z" fill="#606166"/>
 <path d="M1430,60 L1500,40 L1500,720 L1460,720 Z" fill="#57585d"/>
 <path d="M1220,-10 L1500,-10 L1500,110 L1400,90 L1330,130 L1250,110 Z" fill="#54555a"/>
 <path d="M290,190 L360,170 L390,200 L380,230 L330,240 L300,230 Z" fill="#77787c"/>
 <path d="M215,230 L290,270 L370,290 L440,230 L470,170 L480,230 L440,300 L360,330 L270,310 L215,280 Z" fill="#707175"/>
 <path d="M215,410 L280,400 L380,400 L440,410 L440,440 L380,430 L215,450 Z" fill="#727377"/>
 <path d="M240,500 L330,470 L400,500 L420,540 L390,545 L330,500 L250,530 Z" fill="#707175"/>
 <path d="M565,80 L620,45 L635,60 L600,120 L570,125 Z" fill="#606166"/>
 <path d="M960,110 L1000,95 L1010,130 L1060,120 L1090,60 L1100,100 L1070,150 L1000,160 Z" fill="#6e6f73"/>
 <path d="M590,150 L700,160 L680,185 L600,175 Z" fill="#77787c"/>
 <path d="M1200,440 L1225,400 L1235,470 L1215,490 Z" fill="#9a9b9e"/>
</g>
<!-- bushes -->
<g filter="url(#gb2)">
 <path d="M205,880 L270,820 L290,760 L360,700 L420,730 L450,800 L520,860 L600,1000 L600,1540 L-20,1540 L-20,900 Z" fill="#3f4044"/>
 <path d="M1040,940 L1060,780 L1100,760 L1180,770 L1230,720 L1260,620 L1320,590 L1390,620 L1420,710 L1500,730 L1500,1540 L900,1540 L930,1050 Z" fill="#414246"/>
</g>
<g filter="url(#gb1)" opacity=".6">
 <ellipse cx="1250" cy="1000" rx="120" ry="200" fill="#3c3d41"/>
 <ellipse cx="1320" cy="660" rx="40" ry="30" fill="#5e5f63"/>
 <ellipse cx="370" cy="770" rx="40" ry="30" fill="#5c5d61"/>
 <ellipse cx="130" cy="1100" rx="90" ry="200" fill="#46474c"/>
</g>
<!-- uniform -->
<g filter="url(#gb3)">
 <path d="M-20,1540 L40,1430 L180,1330 L470,1195 L700,1290 L900,1320 L1000,1250 L1230,1390 L1345,1512 L1360,1540 Z" fill="#696a6e"/>
 <path d="M120,1400 L470,1200 L500,1250 L150,1450 Z" fill="#86878b"/>
 <path d="M365,1312 L450,1290 L700,1512 L720,1540 L600,1540 Z" fill="#4a4b4f"/>
 <path d="M1000,1250 L1230,1390 L1210,1412 L985,1280 Z" fill="#8c8d91"/>
 <path d="M885,1325 L960,1300 L1030,1512 L940,1520 Z" fill="#5e5f63"/>
 <ellipse cx="982" cy="1386" rx="34" ry="40" fill="#3e3f43"/>
 <ellipse cx="435" cy="1245" rx="30" ry="18" fill="#48494d"/>
 <polygon points="350,1262 362,1280 384,1276 368,1292 374,1312 354,1300 334,1310 340,1290 326,1276 346,1276" fill="#a9aaad"/>
 <polygon points="262,1318 274,1336 296,1332 280,1348 286,1368 266,1356 246,1366 252,1346 238,1332 258,1332" fill="#a5a6a9"/>
 <polygon points="140,1378 152,1394 174,1390 158,1406 164,1424 144,1414 124,1424 130,1404 116,1390 136,1390" fill="#a9aaad"/>
</g>
<!-- collar -->
<g filter="url(#gb3)">
 <path d="M478,1192 L535,1080 L700,1130 L900,1190 L985,1186 L992,1272 L900,1322 L700,1292 Z" fill="#48494d"/>
 <path d="M546,1008 L700,1060 L950,1076 L958,1182 L900,1192 L700,1132 L533,1082 Z" fill="#ececee"/>
 <path d="M905,1100 L915,1188" stroke="#6f7074" stroke-width="6"/>
</g>
<path d="M560,860 L640,900 L740,1000 L850,1050 L960,1032 L950,1078 L700,1062 L546,1010 Z" fill="#5f6064" filter="url(#gb3)"/>
<!-- face -->
<g filter="url(#gb3)">
 <path d="M560,470 L600,412 L800,412 L960,448 L1050,506 L1062,600 L1066,700 L1062,852 L1032,962 L962,1032 L852,1052 L742,1002 L642,902 L582,782 L556,650 Z" fill="url(#gface)"/>
</g>
<g filter="url(#gb1)">
 <ellipse cx="830" cy="480" rx="190" ry="55" fill="#c6c6c8" opacity=".95"/>
 <ellipse cx="790" cy="780" rx="100" ry="90" fill="#adadaf" opacity=".8"/>
 <ellipse cx="930" cy="960" rx="90" ry="55" fill="#b6b6b8" opacity=".85"/>
 <ellipse cx="930" cy="680" rx="50" ry="70" fill="#bdbdbf" opacity=".8"/>
 <ellipse cx="580" cy="600" rx="60" ry="150" fill="#58595d" opacity=".85"/>
 <ellipse cx="680" cy="940" rx="70" ry="100" fill="#6a6b6f" opacity=".8"/>
</g>
<g filter="url(#gb3)">
 <path d="M440,520 L470,430 L600,412 L620,470 L600,560 L580,660 L540,690 L460,650 Z" fill="#6a6b6f"/>
 <path d="M500,470 L560,450 L540,600 L510,640 Z" fill="#9a9b9e" opacity=".7"/>
 <path d="M690,575 L760,545 L840,550 L880,600 L830,640 L740,645 Z" fill="#55565a"/>
 <path d="M950,580 L1000,565 L1056,585 L1050,640 L985,650 Z" fill="#58595d"/>
 <path d="M740,610 L820,600 L830,625 L750,632 Z" fill="#9d9ea1"/>
 <path d="M850,735 L920,760 L990,745 L1000,770 L920,790 L860,770 Z" fill="#606165"/>
 <path d="M800,855 L900,842 L1010,850 L1012,872 L900,868 L815,880 Z" fill="#55565a"/>
 <path d="M830,890 L1000,885 L1000,905 L840,912 Z" fill="#bcbcbe"/>
 <ellipse cx="482" cy="772" rx="72" ry="106" fill="#a3a4a7" transform="rotate(-16 482 772)"/>
 <ellipse cx="492" cy="782" rx="36" ry="72" fill="#525357" transform="rotate(-16 492 782)"/>
</g>
<!-- cap -->
<g filter="url(#gb3)">
 <path d="M432,476 L470,400 L540,300 L620,210 L700,150 L800,100 L900,85 L950,120 L1000,232 L1040,380 L1056,502 L960,446 L800,410 L600,406 L500,440 L440,524 Z" fill="#434449"/>
 <path d="M660,170 L800,196 L950,242 L1002,232 L1004,248 L950,260 L796,212 L655,186 Z" fill="#8b8c90"/>
 <path d="M700,150 L800,100 L900,85 L950,120 L985,200 L940,230 L800,190 Z" fill="#515257"/>
 <polygon points="962,328 972,352 998,352 978,368 986,394 962,378 938,394 946,368 926,352 952,352" fill="#e6e6e8"/>
 <path d="M1018,350 L1036,360 L1046,410 L1026,400 Z" fill="#d3d3d5"/>
 <polygon points="940,140 948,156 964,156 952,168 958,184 940,174 Z" fill="#b0b0b3"/>
</g>
<rect x="0" y="0" width="1492" height="1512" fill="#1c1d20" opacity=".1"/>
<rect x="0" y="0" width="1492" height="1512" filter="url(#ggrain)" opacity=".26"/>
</g></svg></div>

<!-- paragraphs right of thumb -->
<div class="p" style="left:901px;top:434px"><span class="ln">Concerning armored support, the 35th Division was completed by the 1st Tank Brigade (under</span><span class="ln"><a>George S. Patton</a>) with 127 American-crewed Renault FT light <a>tank</a> and 28 French-crewed</span><span class="ln">Schneider medium tanks. The 3d US Tank brigade with 250 French-crewed tank was also involved</span><span class="ln">supporting the V Corps. The 37th and 79th Division were augmented with a French tank regiment</span><span class="ln">(Renault FT light tank) and 2 groups of medium tank (St-Chamond). The 91st Division was</span><span class="ln">augmented with an equivalent force (1 light tank regiment and 2 groups medium tank).</span></div>

<div class="p" style="left:901px;top:712px"><span class="ln">As the battle progressed, both the Americans and the French brought in reinforcements.</span><span class="ln">Eventually, 22 American divisions participated in the battle at one time or another, representing</span><span class="ln">two full field armies.<sup><a>[10]</a></sup> Other French forces involved included the <a>2nd Colonial Corps</a>, under <a>Henri</a></span><span class="ln"><a>Claudel</a>, which had also fought alongside the AEF at the <a class="v">Battle of Saint-Mihiel</a> earlier in September</span><span class="ln">1918.</span></div>

<div class="p" style="left:901px;top:946px"><span class="ln">The opposing forces were wholly German. During this period of the war, German divisions</span><span class="ln">procured only 50 percent or less of their initial strength. The 117th Division, which opposed the</span><span class="ln">U.S. 79th Division during the offensive's first phase, had only 3,300 men in its ranks. Morale varied</span><span class="ln">among German units. For example, divisions that served on the Eastern front had high morale, while conversely</span><span class="ln">divisions that had been on the Western front had poor morale. Resistance grew to approximately 200,000–</span><span class="ln">450,000 German troops from the <a>Fifth Army</a> of <a>Group Gallwitz</a> commanded by General <a>Georg von der Marwitz</a>.</span><span class="ln">The Americans estimated that they opposed parts of 44 German divisions overall, though many fewer at any one</span><span class="ln">time.</span></div>

<div class="h3" style="left:901px;top:1329px">Objective<span class="ed">[ <a>edit</a> ]</span></div>
<div class="p" style="left:901px;top:1396px"><span class="ln">The Allied objective was the capture of the <a>railway</a> hub at <a>Sedan</a> that would break the railway network supporting</span><span class="ln">the German Army in France and <a>Flanders</a>.</span></div>

<div class="h2" style="left:901px;top:1526px">Battle<span class="ed">[ <a>edit</a> ]</span></div>
<div class="abs" style="left:901px;top:1582px;width:1402px;height:2px;background:#a2a9b1"></div>

<div class="h3" style="left:901px;top:1611px">First phase (September 26 – October 4, 1918)<span class="ed">[ <a>edit</a> ]</span></div>
<div class="p" style="left:901px;top:1679px"><span class="ln">"During the three hours preceding H hour, the <a>Allies</a> expended more ammunition than both sides managed to fire</span><span class="ln">throughout the four years of the <a>[American] Civil War</a>. The cost was later calculated to have been $180 million, or</span><span class="ln">$1 million per minute (about $3.5 billion in 2022 dollars)."<sup><a>[11]</a></sup> The American attack began at 05:30 on September</span></div>

<!-- map thumb -->
<div class="thumb" style="left:2162px;top:475px;width:640px;height:580px"></div>
<div class="img" style="left:2170px;top:483px;width:624px;height:483px;background:#f4d3c1"><svg width="620" height="480" viewBox="0 0 620 480" preserveAspectRatio="none"><g id="A_sedanmap">
<defs><filter id="mbw" x="-30%" y="-30%" width="160%" height="160%"><feGaussianBlur stdDeviation="14"/></filter><filter id="mbd" x="-30%" y="-30%" width="160%" height="160%"><feGaussianBlur stdDeviation="30"/></filter>
<clipPath id="mclip"><rect x="8.7" y="7.9" width="600.5" height="458.7"/></clipPath></defs>
<rect x="0" y="0" width="620" height="480" fill="#fdfcfa"/>
<rect x="8.7" y="7.9" width="600.5" height="458.7" fill="#f6dacb"/>
<g clip-path="url(#mclip)">
<g transform="translate(0,0) scale(0.15873)">
<g filter="url(#mbw)" fill="#fffdfb"><path d="M60,60 C117,17 355,43 400,60 C445,77 358,127 330,160 C302,193 265,237 230,260 C195,283 148,290 120,300 C92,310 70,360 60,320 C50,280 3,103 60,60Z"/><path d="M440,60 C470,40 537,40 560,60 C583,80 553,148 580,180 C607,212 697,225 720,250 C743,275 727,297 720,330 C713,363 693,405 680,450 C667,495 660,558 640,600 C620,642 588,692 560,700 C532,708 493,673 470,650 C447,627 442,592 420,560 C398,528 367,482 340,460 C313,438 272,458 260,430 C248,402 250,332 270,290 C290,248 352,218 380,180 C408,142 410,80 440,60Z"/><path d="M890,290 C920,257 1027,238 1060,260 C1093,282 1093,370 1090,420 C1087,470 1055,520 1040,560 C1025,600 1020,645 1000,660 C980,675 940,683 920,650 C900,617 885,520 880,460 C875,400 860,323 890,290Z"/><path d="M640,770 C673,728 773,682 850,670 C927,658 1057,675 1100,700 C1143,725 1117,787 1110,820 C1103,853 1078,870 1060,900 C1042,930 1027,993 1000,1000 C973,1007 930,940 900,940 C870,940 853,990 820,1000 C787,1010 728,1013 700,1000 C672,987 660,958 650,920 C640,882 607,812 640,770Z"/><path d="M1110,770 C1152,762 1277,822 1330,850 C1383,878 1415,893 1430,940 C1445,987 1428,1087 1420,1130 C1412,1173 1400,1172 1380,1200 C1360,1228 1327,1287 1300,1300 C1273,1313 1240,1308 1220,1280 C1200,1252 1202,1167 1180,1130 C1158,1093 1107,1098 1090,1060 C1073,1022 1077,948 1080,900 C1083,852 1068,778 1110,770Z"/><path d="M60,1180 C83,1120 148,1147 200,1150 C252,1153 337,1170 370,1200 C403,1230 407,1278 400,1330 C393,1382 387,1482 330,1512 C273,1542 105,1567 60,1512 C15,1457 37,1240 60,1180Z"/><path d="M90,480 C110,450 173,450 200,470 C227,490 245,552 250,600 C255,648 252,727 230,760 C208,793 145,818 120,800 C95,782 85,703 80,650 C75,597 70,510 90,480Z"/><path d="M760,1140 C780,1113 863,1110 900,1120 C937,1130 980,1172 980,1200 C980,1228 933,1277 900,1290 C867,1303 803,1305 780,1280 C757,1255 740,1167 760,1140Z"/><path d="M1300,420 C1340,417 1407,467 1420,500 C1433,533 1407,603 1380,620 C1353,637 1293,617 1260,600 C1227,583 1173,550 1180,520 C1187,490 1260,423 1300,420Z"/><path d="M430,1350 C467,1326 572,1362 650,1370 C728,1378 842,1376 900,1400 C958,1424 1078,1493 1000,1512 C922,1531 525,1539 430,1512 C335,1485 393,1374 430,1350Z"/><path d="M1080,1380 C1108,1361 1222,1378 1250,1400 C1278,1422 1278,1493 1250,1512 C1222,1531 1108,1534 1080,1512 C1052,1490 1052,1399 1080,1380Z"/></g>
<g filter="url(#mbd)" fill="#f1c4ad" opacity=".7"><path d="M1120,80 C1178,27 1427,43 1500,80 C1573,117 1577,233 1560,300 C1543,367 1468,463 1400,480 C1332,497 1197,467 1150,400 C1103,333 1062,133 1120,80Z"/><path d="M1500,520 C1542,472 1742,497 1800,560 C1858,623 1867,827 1850,900 C1833,973 1750,1008 1700,1000 C1650,992 1583,930 1550,850 C1517,770 1458,568 1500,520Z"/><path d="M1650,1050 C1684,950 1870,1008 1953,1000 C2036,992 2109,950 2150,1000 C2191,1050 2208,1200 2200,1300 C2192,1400 2175,1550 2100,1600 C2025,1650 1825,1692 1750,1600 C1675,1508 1616,1150 1650,1050Z"/><path d="M100,320 C118,260 207,393 260,440 C313,487 387,547 420,600 C453,653 480,710 460,760 C440,810 352,893 300,900 C248,907 183,897 150,800 C117,703 82,380 100,320Z"/><path d="M450,1000 C482,942 608,900 640,950 C672,1000 672,1242 640,1300 C608,1358 482,1350 450,1300 C418,1250 418,1058 450,1000Z"/></g>
</g>
<g transform="translate(310,0) scale(0.15873)">
<g filter="url(#mbw)" fill="#fffdfb"><path d="M1100,1330 C1133,1308 1233,1377 1300,1380 C1367,1383 1433,1358 1500,1350 C1567,1342 1637,1338 1700,1330 C1763,1322 1850,1270 1880,1300 C1910,1330 2010,1477 1880,1512 C1750,1547 1230,1542 1100,1512 C970,1482 1067,1352 1100,1330Z"/></g>
<g filter="url(#mbd)" fill="#f1c4ad" opacity=".7"><path d="M-300,1000 C-267,892 -83,953 0,950 C83,947 158,930 200,980 C242,1030 267,1161 250,1250 C233,1339 142,1437 100,1512 C58,1587 50,1685 0,1700 C-50,1715 -150,1717 -200,1600 C-250,1483 -333,1108 -300,1000Z"/><path d="M330,420 C353,407 460,413 480,430 C500,447 473,507 450,520 C427,533 360,527 340,510 C320,493 307,433 330,420Z"/><path d="M930,760 C947,748 1023,755 1040,770 C1057,785 1047,838 1030,850 C1013,862 957,855 940,840 C923,825 913,772 930,760Z"/></g>
</g>
<g transform="translate(0,240) scale(0.15873)">
<g filter="url(#mbw)" fill="#fffdfb"><path d="M60,400 C100,303 227,420 300,420 C373,420 433,377 500,400 C567,423 653,513 700,560 C747,607 797,643 780,680 C763,717 663,750 600,780 C537,810 467,830 400,860 C333,890 257,937 200,960 C143,983 83,1093 60,1000 C37,907 20,497 60,400Z"/><path d="M100,20 C128,-13 233,30 250,60 C267,90 228,167 200,200 C172,233 97,290 80,260 C63,230 72,53 100,20Z"/><path d="M330,290 C347,272 427,265 450,280 C473,295 487,362 470,380 C453,398 373,405 350,390 C327,375 313,308 330,290Z"/><path d="M1230,280 C1280,255 1422,247 1500,250 C1578,253 1653,272 1700,300 C1747,328 1788,383 1780,420 C1772,457 1705,510 1650,520 C1595,530 1508,488 1450,480 C1392,472 1342,483 1300,470 C1258,457 1212,432 1200,400 C1188,368 1180,305 1230,280Z"/><path d="M1100,590 C1133,563 1260,565 1300,600 C1340,635 1348,750 1340,800 C1332,850 1282,890 1250,900 C1218,910 1175,883 1150,860 C1125,837 1108,805 1100,760 C1092,715 1067,617 1100,590Z"/><path d="M1700,520 C1739,473 1911,440 1953,520 C1995,600 1978,923 1953,1000 C1928,1077 1839,1013 1800,980 C1761,947 1737,877 1720,800 C1703,723 1661,567 1700,520Z"/><path d="M900,800 C930,787 1050,787 1100,820 C1150,853 1200,945 1200,1000 C1200,1055 1137,1142 1100,1150 C1063,1158 1010,1092 980,1050 C950,1008 933,942 920,900 C907,858 870,813 900,800Z"/><path d="M1000,400 C1017,370 1117,393 1150,420 C1183,447 1217,530 1200,560 C1183,590 1083,627 1050,600 C1017,573 983,430 1000,400Z"/><path d="M60,1000 C117,980 277,917 400,900 C523,883 733,880 800,900 C867,920 923,998 800,1018 C677,1038 183,1021 60,1018 C-63,1015 3,1020 60,1000Z"/></g>
<g filter="url(#mbd)" fill="#f1c4ad" opacity=".7"><path d="M1300,1150 C1333,1117 1475,1138 1500,1180 C1525,1222 1483,1367 1450,1400 C1417,1433 1325,1422 1300,1380 C1275,1338 1267,1183 1300,1150Z"/><path d="M100,80 C163,48 423,32 500,60 C577,88 593,210 560,250 C527,290 373,300 300,300 C227,300 153,287 120,250 C87,213 37,112 100,80Z"/><path d="M900,350 C920,320 987,385 1000,420 C1013,455 1000,530 980,560 C960,590 893,635 880,600 C867,565 880,380 900,350Z"/><path d="M1250,900 C1275,875 1442,908 1500,950 C1558,992 1625,1125 1600,1150 C1575,1175 1408,1142 1350,1100 C1292,1058 1225,925 1250,900Z"/><path d="M120,620 C153,587 350,630 400,660 C450,690 453,767 420,800 C387,833 250,890 200,860 C150,830 87,653 120,620Z"/></g>
</g>
<g transform="translate(310,240) scale(0.15873)">
<g filter="url(#mbw)" fill="#fffdfb"><path d="M0,0 C20,-42 87,-25 120,0 C153,25 203,100 200,150 C197,200 133,283 100,300 C67,317 17,300 0,250 C-17,200 -20,42 0,0Z"/><path d="M1200,0 C1305,-33 1767,-47 1880,0 C1993,47 1910,225 1880,280 C1850,335 1755,335 1700,330 C1645,325 1600,255 1550,250 C1500,245 1450,308 1400,300 C1350,292 1283,250 1250,200 C1217,150 1095,33 1200,0Z"/><path d="M0,780 C17,708 73,813 100,850 C127,887 152,933 160,1000 C168,1067 167,1200 150,1250 C133,1300 85,1295 60,1300 C35,1305 10,1367 0,1280 C-10,1193 -17,852 0,780Z"/><path d="M0,500 C17,467 87,487 100,520 C113,553 97,667 80,700 C63,733 13,753 0,720 C-13,687 -17,533 0,500Z"/><path d="M130,1250 C158,1220 242,1203 270,1220 C298,1237 312,1316 300,1350 C288,1384 233,1417 200,1425 C167,1433 112,1429 100,1400 C88,1371 102,1280 130,1250Z"/><path d="M1280,700 C1290,658 1340,700 1350,750 C1360,800 1350,958 1340,1000 C1330,1042 1300,1050 1290,1000 C1280,950 1270,742 1280,700Z"/></g>
<g filter="url(#mbd)" fill="#f1c4ad" opacity=".7"><path d="M500,350 C553,340 758,395 800,420 C842,445 803,490 750,500 C697,510 522,505 480,480 C438,455 447,360 500,350Z"/><path d="M0,560 C50,543 242,560 300,600 C358,640 375,763 350,800 C325,837 208,837 150,820 C92,803 25,743 0,700 C-25,657 -50,577 0,560Z"/><path d="M200,900 C242,850 453,858 500,900 C547,942 522,1100 480,1150 C438,1200 297,1242 250,1200 C203,1158 158,950 200,900Z"/><path d="M850,700 C873,678 978,693 1000,720 C1022,747 1003,838 980,860 C957,882 882,877 860,850 C838,823 827,722 850,700Z"/></g>
</g>
<g transform="translate(0,0) scale(0.15873)">
<g fill="none" stroke="#8fb4cf" stroke-width="8" stroke-linecap="round" opacity=".75"><path d="M500,60 C502,75 500,127 510,150 C520,173 528,193 560,200 C592,207 655,193 700,190 C745,187 797,170 830,180 C863,190 862,213 900,250 C938,287 1022,362 1060,400 C1098,438 1107,453 1130,480 C1153,507 1193,530 1200,560 C1207,590 1162,637 1170,660 C1178,683 1223,683 1250,700 C1277,717 1305,727 1330,760 C1355,793 1385,852 1400,900 C1415,948 1422,1000 1420,1050 C1418,1100 1388,1153 1390,1200 C1392,1247 1403,1297 1430,1330 C1457,1363 1518,1370 1550,1400 C1582,1430 1608,1493 1620,1512"/><path d="M740,60 C740,92 760,177 740,250 C720,323 642,433 620,500 C598,567 612,625 610,650"/><path d="M340,460 C347,483 358,557 380,600 C402,643 455,700 470,720"/><path d="M230,900 C242,917 275,958 300,1000 C325,1042 358,1100 380,1150 C402,1200 407,1253 430,1300 C453,1347 505,1408 520,1430"/></g>
<g fill="none" stroke="#38322f" stroke-width="5.8" stroke-linecap="round" stroke-linejoin="round"><path d="M60,300 C80,288 140,260 180,230 C220,200 265,148 300,120 C335,92 375,70 390,60"/><path d="M60,440 C83,438 167,413 200,430 C233,447 227,505 260,540 C293,575 362,603 400,640 C438,677 473,733 490,760 C507,787 475,798 500,800 C525,802 582,793 640,770 C698,747 773,673 850,660 C927,647 1020,662 1100,690 C1180,718 1280,808 1330,830 C1380,852 1330,838 1400,820 C1470,802 1658,740 1750,720 C1842,700 1919,703 1953,700"/><path d="M380,60 C392,72 430,108 450,130 C470,152 472,175 500,190 C528,205 580,202 620,220 C660,238 728,267 740,300 C752,333 697,383 690,420 C683,457 708,477 700,520 C692,563 652,637 640,680 C628,723 628,715 630,780 C632,845 642,975 650,1070 C658,1165 665,1276 680,1350 C695,1424 730,1485 740,1512"/><path d="M120,520 C128,550 173,637 170,700 C167,763 115,833 100,900 C85,967 63,1050 80,1100 C97,1150 150,1185 200,1200 C250,1215 322,1190 380,1190 C438,1190 522,1198 550,1200"/><path d="M500,800 C492,817 450,863 450,900 C450,937 503,983 500,1020 C497,1057 450,1092 430,1120 C410,1148 385,1143 380,1190 C375,1237 395,1346 400,1400 C405,1454 408,1493 410,1512"/><path d="M830,180 C842,187 858,207 900,220 C942,233 1022,252 1080,260 C1138,268 1210,250 1250,270 C1290,290 1278,342 1320,380 C1362,418 1437,470 1500,500 C1563,530 1657,523 1700,560 C1743,597 1750,693 1760,720"/><path d="M890,430 C892,462 893,580 900,620 C907,660 925,662 930,670"/><path d="M1080,300 C1082,320 1078,390 1090,420 C1102,450 1123,457 1150,480 C1177,503 1220,532 1250,560 C1280,588 1308,605 1330,650 C1352,695 1372,800 1380,830"/><path d="M650,1070 C683,1065 792,1025 850,1040 C908,1055 958,1133 1000,1160 C1042,1187 1058,1187 1100,1200 C1142,1213 1200,1242 1250,1240 C1300,1238 1375,1173 1400,1190 C1425,1207 1375,1305 1400,1340 C1425,1375 1525,1390 1550,1400"/><path d="M860,1040 C867,1025 868,983 900,950 C932,917 1025,858 1050,840"/><path d="M60,1400 C92,1383 197,1335 250,1300 C303,1265 358,1208 380,1190"/><path d="M550,1200 C553,1220 548,1295 570,1320 C592,1345 628,1340 680,1350 C732,1360 827,1368 880,1380 C933,1392 947,1417 1000,1420 C1053,1423 1133,1413 1200,1400 C1267,1387 1367,1350 1400,1340"/><path d="M1330,830 C1317,852 1283,932 1250,960 C1217,988 1163,983 1130,1000 C1097,1017 1072,1033 1050,1060 C1028,1087 1008,1143 1000,1160"/><path d="M1760,720 C1772,742 1820,803 1830,850 C1840,897 1817,942 1820,1000 C1823,1058 1842,1133 1850,1200 C1858,1267 1867,1367 1870,1400"/><path d="M1450,60 C1462,75 1492,135 1520,150 C1548,165 1590,133 1620,150 C1650,167 1662,208 1700,250 C1738,292 1808,378 1850,400 C1892,422 1936,383 1953,380"/><path d="M1400,820 C1433,828 1533,840 1600,870 C1667,900 1741,987 1800,1000 C1859,1013 1928,958 1953,950"/><path d="M1953,150 L1620,150"/><path d="M60,1190 L200,1200"/><path d="M1100,1200 C1103,1217 1103,1267 1120,1300 C1137,1333 1178,1365 1200,1400 C1222,1435 1242,1493 1250,1512"/></g>
<g fill="none" stroke="#2a3aa0" stroke-width="5"><path d="M520,200 L450,290"/><path d="M720,500 C707,537 655,673 640,720 C625,767 627,717 630,780 C633,843 652,1005 660,1100 C668,1195 677,1308 680,1350"/><path d="M1060,480 L970,700"/><path d="M970,690 C992,690 1078,678 1100,690 C1122,702 1115,708 1100,760 C1085,812 1027,933 1010,1000 C993,1067 997,1093 1000,1160 C1003,1227 1025,1360 1030,1400"/><path d="M1330,880 C1308,917 1230,1038 1200,1100 C1170,1162 1152,1200 1150,1250 C1148,1300 1183,1375 1190,1400"/><path d="M1590,940 L1540,1030"/><path d="M740,1350 L750,1512"/></g>
<g fill="none" stroke="#b8332c" stroke-width="5"><path d="M1110,490 C1147,472 1273,410 1330,380 C1387,350 1413,340 1450,310 C1487,280 1530,242 1550,200 C1570,158 1567,83 1570,60"/></g>
<g fill="none" stroke="#bb2c27" stroke-width="9" stroke-dasharray="60 14 10 14"><path d="M60,905 C80,909 152,934 180,930 C208,926 210,875 230,880 C250,885 275,933 300,960 C325,987 360,1008 380,1040 C400,1072 413,1102 420,1150 C427,1198 382,1298 420,1330 C458,1362 600,1343 650,1340 C700,1337 678,1318 720,1310 C762,1302 853,1313 900,1290 C947,1267 975,1202 1000,1170 C1025,1138 1030,1115 1050,1100 C1070,1085 1095,1075 1120,1080 C1145,1085 1177,1110 1200,1130 C1223,1150 1243,1178 1260,1200 C1277,1222 1277,1237 1300,1260 C1323,1283 1375,1318 1400,1340 C1425,1362 1430,1382 1450,1390 C1470,1398 1478,1378 1520,1390 C1562,1402 1653,1440 1700,1460 C1747,1480 1783,1503 1800,1512"/><path d="M650,935 C668,929 735,912 760,900 C785,888 787,862 800,860 C813,858 825,892 840,890 C855,888 877,838 890,850 C903,862 905,940 920,960 C935,980 957,983 980,970 C1003,957 1040,908 1060,880 C1080,852 1093,813 1100,800"/><path d="M1060,880 C1067,892 1077,930 1100,950 C1123,970 1170,982 1200,1000 C1230,1018 1257,1047 1280,1060 C1303,1073 1323,1083 1340,1080 C1357,1077 1372,1020 1380,1040 C1388,1060 1390,1152 1390,1200 C1390,1248 1382,1308 1380,1330"/><path d="M1150,1512 C1167,1508 1208,1492 1250,1490 C1292,1488 1370,1515 1400,1500 C1430,1485 1425,1417 1430,1400"/></g>
<g fill="none" stroke="#c5302a" stroke-width="15" stroke-linecap="round"></g>
<g fill="none" stroke="#161a72" stroke-width="12" stroke-dasharray="54 20"><path d="M550,60 C552,68 561,93 560,110 C559,127 535,147 545,160 C555,173 584,183 620,190 C656,197 713,188 760,200 C807,212 860,238 900,260 C940,282 973,310 1000,330 C1027,350 1047,357 1060,380 C1073,403 1068,447 1080,470 C1092,493 1100,503 1130,520 C1160,537 1227,547 1260,570 C1293,593 1313,628 1330,660 C1347,692 1345,732 1360,760 C1375,788 1387,810 1420,830 C1453,850 1513,850 1560,880 C1607,910 1657,987 1700,1010 C1743,1033 1798,1005 1820,1020 C1842,1035 1823,1062 1830,1100 C1837,1138 1845,1217 1860,1250 C1875,1283 1904,1283 1920,1300 C1936,1317 1948,1342 1953,1350"/></g>
<g fill="#fff" stroke="#3a3ea8" stroke-width="6"><rect x="278" y="292" width="254" height="140"/><rect x="1478" y="1040" width="127" height="45"/><rect x="975" y="1435" width="85" height="40"/></g>
<g fill="#fff" stroke="#c5403a" stroke-width="6"><rect x="1045" y="82" width="170" height="78"/><rect x="148" y="828" width="95" height="34"/><rect x="480" y="878" width="100" height="42"/><rect x="1945" y="300" width="15" height="75"/></g>
<g font-family="'Liberation Sans',sans-serif" font-size="27" fill="#1a1a1a" font-weight="bold"><text x="815" y="128">Sedan</text><text x="410" y="190">Flize</text><text x="690" y="265">Wadelincourt</text><text x="582" y="305">Chehery</text><text x="838" y="305">Pont</text><text x="828" y="333">Maugis</text><text x="945" y="242">Bazeilles</text><text x="1085" y="295">Douzy</text><text x="1100" y="358">Mairy</text><text x="1350" y="392">Carignan</text><text x="1180" y="480">Mouzon</text><text x="1270" y="552">Moulins</text><text x="912" y="462">Haraucourt</text><text x="912" y="520">Raucourt</text><text x="588" y="508">Chemery</text><text x="770" y="636">La Besace</text><text x="1048" y="675">Beaumont</text><text x="1350" y="655">Inor</text><text x="1380" y="698">Martincourt</text><text x="1762" y="708">Montmedy</text><text x="1400" y="795">Cervisy</text><text x="1405" y="825">Stenay</text><text x="352" y="790">Le Chesne</text><text x="645" y="822">Les Petites-</text><text x="645" y="850">Armoises</text><text x="895" y="838">Vaux-En-</text><text x="905" y="865">Dieulet</text><text x="118" y="955">Attigny</text><text x="525" y="975">Chatillon-</text><text x="535" y="1003">Sur-Bar</text><text x="1020" y="1005">Fosse</text><text x="900" y="1058">Buzancy</text><text x="1105" y="1052">Barricourt</text><text x="1480" y="970">Beauclair</text><text x="1820" y="1018">Jametz</text><text x="670" y="1108">Boult-Aux-Bois</text><text x="1030" y="1158">Bayonville</text><text x="262" y="1175">Vouziers</text><text x="880" y="1202">Verpel</text><text x="1105" y="1202">Remonville</text><text x="1415" y="1215">Dun-Sur-Meuse</text><text x="1705" y="1238">Peuvillers</text><text x="1225" y="1315">Bantheville</text><text x="1705" y="1338">Damvillers</text><text x="580" y="1390">Grandpre</text><text x="860" y="1360">St. Juvin</text><text x="1065" y="1365">Romagne</text><text x="1275" y="1355">Cunel</text><text x="1420" y="1342">Brieulles</text><text x="282" y="1443">Monthois</text><text x="835" y="1458">Marcq</text><text x="1000" y="1425">Sommerance</text><text x="985" y="1462">Fleville</text><text x="1470" y="1492">Consenvoye</text><text x="260" y="190">Charbeaux</text></g>
</g>
<g transform="translate(310,0) scale(0.15873)">
<g fill="none" stroke="#8fb4cf" stroke-width="8" stroke-linecap="round" opacity=".75"><path d="M1880,880 C1858,900 1797,963 1750,1000 C1703,1037 1637,1067 1600,1100 C1563,1133 1547,1158 1530,1200 C1513,1242 1498,1298 1500,1350 C1502,1402 1533,1485 1540,1512"/><path d="M1860,900 C1840,920 1780,985 1740,1020 C1700,1055 1652,1078 1620,1110 C1588,1142 1567,1170 1550,1210 C1533,1250 1517,1300 1520,1350 C1523,1400 1562,1485 1570,1512"/><path d="M0,100 C17,105 67,117 100,130 C133,143 167,166 200,180 C233,194 267,203 300,215 C333,227 383,244 400,250"/><path d="M820,450 C833,438 877,380 900,380 C923,380 960,423 960,450 C960,477 927,518 900,540 C873,562 833,563 800,580 C767,597 717,630 700,640"/><path d="M0,800 C17,808 67,825 100,850 C133,875 167,932 200,950 C233,968 283,958 300,960"/><path d="M350,880 C372,870 438,840 480,820 C522,800 572,780 600,760 C628,740 642,710 650,700"/><path d="M1000,1000 C1000,1017 983,1067 1000,1100 C1017,1133 1067,1175 1100,1200 C1133,1225 1192,1225 1200,1250 C1208,1275 1153,1317 1150,1350 C1147,1383 1175,1433 1180,1450"/></g>
<g fill="none" stroke="#38322f" stroke-width="5.8" stroke-linecap="round" stroke-linejoin="round"><path d="M0,180 C25,185 100,204 150,210 C200,216 250,214 300,215 C350,216 408,224 450,215 C492,206 502,171 550,160 C598,149 690,155 740,150 C790,145 807,142 850,130 C893,118 955,95 1000,80 C1045,65 1100,47 1120,40"/><path d="M350,40 C342,58 313,115 300,150 C287,185 295,200 270,250 C245,300 173,402 150,450 C127,498 142,515 130,540 C118,565 102,582 80,600 C58,618 13,642 0,650"/><path d="M150,560 C192,538 337,468 400,430 C463,392 490,363 530,330 C570,297 605,260 640,230 C675,200 723,163 740,150"/><path d="M740,150 C742,175 750,245 750,300 C750,355 748,430 740,480 C732,530 717,565 700,600 C683,635 693,663 640,690 C587,717 435,728 380,760 C325,792 322,847 310,880 C298,913 302,923 310,960 C318,997 338,1043 360,1100 C382,1157 407,1231 440,1300 C473,1369 540,1477 560,1512"/><path d="M740,150 C767,162 843,202 900,220 C957,238 1030,240 1080,260 C1130,280 1148,320 1200,340 C1252,360 1358,373 1390,380"/><path d="M640,690 C667,675 740,635 800,600 C860,565 933,510 1000,480 C1067,450 1135,437 1200,420 C1265,403 1358,387 1390,380"/><path d="M1390,380 C1408,375 1465,372 1500,350 C1535,328 1558,275 1600,250 C1642,225 1703,223 1750,200 C1797,177 1858,125 1880,110"/><path d="M1400,40 C1402,83 1412,243 1410,300 C1408,357 1393,367 1390,380"/><path d="M1390,380 C1405,400 1455,455 1480,500 C1505,545 1528,600 1540,650 C1552,700 1557,750 1550,800 C1543,850 1512,908 1500,950 C1488,992 1477,1017 1480,1050 C1483,1083 1512,1125 1520,1150 C1528,1175 1528,1192 1530,1200"/><path d="M1390,400 C1367,427 1293,513 1250,560 C1207,607 1155,640 1130,680 C1105,720 1112,767 1100,800 C1088,833 1073,847 1060,880 C1047,913 1027,980 1020,1000"/><path d="M1420,380 C1450,375 1553,338 1600,350 C1647,362 1658,420 1700,450 C1742,480 1825,517 1850,530"/><path d="M640,690 C650,705 673,752 700,780 C727,808 758,835 800,860 C842,885 913,907 950,930 C987,953 995,977 1020,1000 C1045,1023 1048,1048 1100,1070 C1152,1092 1290,1092 1330,1130 C1370,1168 1325,1252 1340,1300 C1355,1348 1397,1385 1420,1420 C1443,1455 1470,1497 1480,1512"/><path d="M800,860 C792,875 753,910 750,950 C747,990 772,1050 780,1100 C788,1150 795,1200 800,1250 C805,1300 793,1365 810,1400 C827,1435 875,1441 900,1460 C925,1479 950,1503 960,1512"/><path d="M310,960 C338,967 425,977 480,1000 C535,1023 590,1083 640,1100 C690,1117 757,1100 780,1100"/><path d="M640,1100 C643,1117 647,1167 660,1200 C673,1233 697,1267 720,1300 C743,1333 787,1383 800,1400"/><path d="M0,940 C25,940 98,937 150,940 C202,943 283,957 310,960"/><path d="M0,800 C25,810 98,833 150,860 C202,887 283,943 310,960"/><path d="M350,1120 C325,1133 242,1162 200,1200 C158,1238 125,1298 100,1350 C75,1402 58,1485 50,1512"/><path d="M1530,1200 C1550,1183 1613,1133 1650,1100 C1687,1067 1712,1025 1750,1000 C1788,975 1858,958 1880,950"/><path d="M1530,1200 C1558,1217 1642,1275 1700,1300 C1758,1325 1850,1342 1880,1350"/><path d="M1370,690 C1400,688 1503,687 1550,680 C1597,673 1617,647 1650,650 C1683,653 1732,667 1750,700 C1768,733 1768,803 1760,850 C1752,897 1733,942 1700,980 C1667,1018 1583,1063 1560,1080"/><path d="M1340,1300 C1367,1297 1468,1297 1500,1280 C1532,1263 1525,1213 1530,1200"/><path d="M1530,1200 C1532,1225 1535,1298 1540,1350 C1545,1402 1557,1485 1560,1512"/><path d="M0,40 C25,50 100,71 150,100 C200,129 275,196 300,215"/></g>
<g fill="none" stroke="#2a3aa0" stroke-width="5"></g>
<g fill="none" stroke="#b8332c" stroke-width="5"><path d="M1380,1195 C1358,1212 1288,1262 1250,1300 C1212,1338 1178,1385 1150,1420 C1122,1455 1092,1497 1080,1512"/></g>
<g fill="none" stroke="#bb2c27" stroke-width="9" stroke-dasharray="60 14 10 14"></g>
<g fill="none" stroke="#c5302a" stroke-width="15" stroke-linecap="round"></g>
<g fill="none" stroke="#161a72" stroke-width="12" stroke-dasharray="54 20"></g>
<g fill="#fff" stroke="#3a3ea8" stroke-width="6"></g>
<g fill="#fff" stroke="#c5403a" stroke-width="6"><rect x="0" y="300" width="170" height="75"/></g>
<g font-family="'Liberation Sans',sans-serif" font-size="27" fill="#1a1a1a" font-weight="bold"><text x="610" y="185">Arlon</text><text x="190" y="578">Virton</text><text x="672" y="722">Longwy</text><text x="335" y="955">Longuyon</text><text x="1290" y="458">Luxembourg</text><text x="905" y="1160">Audun</text><text x="1360" y="1175">Thionville</text><text x="475" y="1318">Spincourt</text></g>
</g>
<g transform="translate(0,240) scale(0.15873)">
<g fill="none" stroke="#8fb4cf" stroke-width="8" stroke-linecap="round" opacity=".75"><path d="M650,180 C658,208 683,305 700,350 C717,395 743,415 750,450 C757,485 727,522 740,560 C753,598 808,640 830,680 C852,720 850,768 870,800 C890,832 928,837 950,870 C972,903 995,962 1000,1000 C1005,1038 983,1083 980,1100"/><path d="M1640,180 C1658,192 1723,213 1750,250 C1777,287 1778,358 1800,400 C1822,442 1860,458 1880,500 C1900,542 1908,600 1920,650 C1932,700 1948,775 1953,800"/><path d="M1660,200 C1678,210 1742,227 1770,260 C1798,293 1808,363 1830,400 C1852,437 1880,447 1900,480 C1920,513 1944,580 1953,600"/><path d="M1200,480 C1203,500 1228,577 1220,600 C1212,623 1187,620 1150,620 C1113,620 1025,603 1000,600"/></g>
<g fill="none" stroke="#38322f" stroke-width="5.8" stroke-linecap="round" stroke-linejoin="round"><path d="M60,540 C83,525 167,493 200,450 C233,407 227,317 260,280 C293,243 355,237 400,230 C445,223 480,250 530,240 C580,230 655,183 700,170 C745,157 783,162 800,160"/><path d="M420,0 C428,22 452,90 470,130 C488,170 512,195 530,240 C548,285 552,347 580,400 C608,453 665,518 700,560 C735,602 768,630 790,650 C812,670 823,675 830,680"/><path d="M60,595 C100,602 227,624 300,640 C373,656 447,680 500,690 C553,700 565,702 620,700 C675,698 795,683 830,680"/><path d="M60,990 C83,982 143,962 200,940 C257,918 333,890 400,860 C467,830 528,790 600,760 C672,730 792,693 830,680"/><path d="M830,680 C825,700 805,744 800,800 C795,856 800,982 800,1018"/><path d="M830,680 C858,667 955,615 1000,600 C1045,585 1067,590 1100,590 C1133,590 1167,582 1200,600 C1233,618 1278,662 1300,700 C1322,738 1313,797 1330,830 C1347,863 1375,863 1400,900 C1425,937 1452,1002 1480,1050 C1508,1098 1542,1132 1570,1190 C1598,1248 1637,1365 1650,1400"/><path d="M1200,600 C1217,578 1258,492 1300,470 C1342,448 1400,457 1450,470 C1500,483 1550,553 1600,550 C1650,547 1717,475 1750,450 C1783,425 1792,408 1800,400"/><path d="M1650,530 C1650,558 1645,638 1650,700 C1655,762 1678,840 1680,900 C1682,960 1678,1012 1660,1060 C1642,1108 1585,1168 1570,1190"/><path d="M890,1300 C908,1308 957,1347 1000,1350 C1043,1353 1093,1330 1150,1320 C1207,1310 1282,1288 1340,1290 C1398,1292 1448,1322 1500,1330 C1552,1338 1574,1348 1650,1340 C1726,1332 1902,1290 1953,1280"/><path d="M1570,1190 C1600,1208 1686,1268 1750,1300 C1814,1332 1919,1367 1953,1380"/><path d="M980,0 C1000,30 1072,113 1100,180 C1128,247 1133,330 1150,400 C1167,470 1192,567 1200,600"/><path d="M1800,400 C1817,417 1874,458 1900,500 C1926,542 1944,625 1953,650"/><path d="M890,1300 L950,1430"/><path d="M1100,180 C1125,167 1217,130 1250,100 C1283,70 1292,17 1300,0"/><path d="M1800,400 C1800,367 1774,250 1800,200 C1826,150 1928,117 1953,100"/></g>
<g fill="none" stroke="#2a3aa0" stroke-width="5"><path d="M420,400 L380,510"/><path d="M420,400 L465,510"/><path d="M180,340 L185,385"/></g>
<g fill="none" stroke="#2a3aa0" stroke-width="6" stroke-dasharray="30 10 6 10 6 10"><path d="M770,0 C775,33 787,117 800,200 C813,283 833,400 850,500 C867,600 888,728 900,800 C912,872 917,908 920,930"/><path d="M1100,80 C1117,117 1167,222 1200,300 C1233,378 1283,508 1300,550"/><path d="M1400,50 C1413,92 1453,222 1480,300 C1507,378 1547,483 1560,520"/><path d="M795,180 C801,217 816,323 830,400 C844,477 872,600 880,640"/></g>
<g fill="none" stroke="#b8332c" stroke-width="5"></g>
<g fill="none" stroke="#bb2c27" stroke-width="9" stroke-dasharray="60 14 10 14"><path d="M800,160 C817,155 867,148 900,130 C933,112 970,70 1000,50 C1030,30 1067,17 1080,10"/><path d="M1750,0 C1767,17 1825,73 1850,100 C1875,127 1892,150 1900,160"/></g>
<g fill="none" stroke="#c5352f" stroke-width="9" stroke-dasharray="6 22" stroke-linecap="round"><path d="M770,265 C792,268 857,279 900,280 C943,281 997,283 1030,270 C1063,257 1083,228 1100,200 C1117,172 1105,127 1130,100 C1155,73 1230,50 1250,40"/><path d="M1300,130 L1420,150"/></g>
<g fill="none" stroke="#c5302a" stroke-width="15" stroke-linecap="round"><path d="M60,385 C117,385 310,391 400,385 C490,379 533,360 600,350 C667,340 742,326 800,325 C858,324 900,351 950,345 C1000,339 1042,308 1100,290 C1158,272 1233,260 1300,240 C1367,220 1433,184 1500,170 C1567,156 1624,152 1700,155 C1776,158 1911,184 1953,190"/></g>
<g fill="none" stroke="#161a72" stroke-width="12" stroke-dasharray="54 20"><path d="M1900,0 L1910,160"/></g>
<g fill="#fff" stroke="#3a3ea8" stroke-width="6"><rect x="368" y="543" width="147" height="69"/><rect x="1010" y="508" width="128" height="67"/><rect x="1318" y="370" width="127" height="66"/><rect x="1528" y="295" width="132" height="67"/><rect x="1482" y="665" width="150" height="70"/><rect x="1692" y="1105" width="170" height="75"/><rect x="1880" y="260" width="80" height="60"/></g>
<g fill="#fff" stroke="#c5403a" stroke-width="6"><rect x="590" y="125" width="112" height="45"/><rect x="628" y="240" width="124" height="50"/><rect x="118" y="290" width="114" height="48"/></g>
<g font-family="'Liberation Sans',sans-serif" font-size="27" fill="#1a1a1a" font-weight="bold"><text x="1665" y="398">Verdun</text><text x="1215" y="590">Clermont</text><text x="970" y="208">Varennes</text><text x="1258" y="312">Avocourt</text><text x="1495" y="248">Esnes</text><text x="1468" y="468">Dombasle</text><text x="1310" y="508">Parois</text><text x="1298" y="662">Rarecourt</text><text x="1440" y="855">Ippecourt</text><text x="1680" y="865">Souilly</text><text x="1210" y="1015">Triaucourt</text><text x="1325" y="1180">Foucaucourt</text><text x="95" y="778">St. Remy-Sur-Bussy</text><text x="808" y="22">Chatel-</text><text x="812" y="50">Chehery</text><text x="865" y="88">Apremont</text><text x="1180" y="222">Cheppy</text><text x="1115" y="265">Boureuilles</text><text x="1275" y="185">Malancourt</text><text x="1270" y="95">Montfaucon</text><text x="1390" y="45">Septsarges</text><text x="1465" y="105">Bethincourt</text><text x="1515" y="155">Cumieres</text><text x="1200" y="15">Georges</text><text x="1770" y="668">Argonne</text></g>
<g font-family="'Liberation Sans',sans-serif" fill="#111" font-weight="bold"><text x="880" y="702" font-size="30" letter-spacing="2">St. Menehould</text></g>
</g>
<g transform="translate(310,240) scale(0.15873)">
<g fill="none" stroke="#8fb4cf" stroke-width="8" stroke-linecap="round" opacity=".75"><path d="M1600,0 C1603,33 1622,125 1620,200 C1618,275 1627,383 1590,450 C1553,517 1443,542 1400,600 C1357,658 1347,742 1330,800 C1313,858 1298,900 1300,950 C1302,1000 1330,1058 1340,1100 C1350,1142 1350,1146 1360,1200 C1370,1254 1393,1388 1400,1425"/><path d="M1630,0 C1632,33 1643,123 1640,200 C1637,277 1645,392 1610,460 C1575,528 1473,553 1430,610 C1387,667 1368,743 1350,800 C1332,857 1318,900 1320,950 C1322,1000 1350,1058 1360,1100 C1370,1142 1370,1146 1380,1200 C1390,1254 1413,1388 1420,1425"/><path d="M0,850 C17,867 67,908 100,950 C133,992 172,1050 200,1100 C228,1150 270,1208 270,1250 C270,1292 208,1321 200,1350 C192,1379 217,1412 220,1425"/><path d="M150,30 C175,33 262,55 300,50 C338,45 367,8 380,0"/><path d="M1520,600 C1527,625 1547,700 1560,750 C1573,800 1600,858 1600,900 C1600,942 1567,983 1560,1000"/><path d="M400,250 C417,263 458,310 500,330 C542,350 600,368 650,370 C700,372 752,350 800,340 C848,330 917,315 940,310"/><path d="M780,740 C788,750 830,783 830,800 C830,817 788,833 780,840"/></g>
<g fill="none" stroke="#38322f" stroke-width="5.8" stroke-linecap="round" stroke-linejoin="round"><path d="M0,370 C25,357 83,317 150,290 C217,263 325,232 400,210 C475,188 533,178 600,160 C667,142 725,117 800,100 C875,83 1008,67 1050,60"/><path d="M0,50 C17,58 58,90 100,100 C142,110 200,92 250,110 C300,128 358,178 400,210 C442,242 450,280 500,300 C550,320 627,328 700,330 C773,332 900,313 940,310"/><path d="M600,0 C617,17 667,70 700,100 C733,130 767,150 800,180 C833,210 877,258 900,280 C923,302 933,305 940,310"/><path d="M940,310 C950,300 973,268 1000,250 C1027,232 1058,225 1100,200 C1142,175 1208,133 1250,100 C1292,67 1333,17 1350,0"/><path d="M940,310 C945,328 968,380 970,420 C972,460 948,512 950,550 C952,588 972,622 980,650 C988,678 988,690 1000,720 C1012,750 1028,800 1050,830 C1072,860 1117,888 1130,900"/><path d="M0,460 C33,470 133,508 200,520 C267,532 333,522 400,530 C467,538 533,562 600,570 C667,578 742,583 800,580 C858,577 900,553 950,550 C1000,547 1047,572 1100,560 C1153,548 1212,492 1270,480 C1328,468 1397,495 1450,490 C1503,485 1567,457 1590,450"/><path d="M1140,220 C1158,233 1207,278 1250,300 C1293,322 1358,333 1400,350 C1442,367 1468,383 1500,400 C1532,417 1575,442 1590,450"/><path d="M1590,450 C1582,425 1552,358 1540,300 C1528,242 1520,150 1520,100 C1520,50 1537,17 1540,0"/><path d="M1590,450 C1608,433 1673,400 1700,350 C1727,300 1720,203 1750,150 C1780,97 1858,50 1880,30"/><path d="M1590,450 C1600,475 1623,558 1650,600 C1677,642 1712,655 1750,700 C1788,745 1858,842 1880,870"/><path d="M1590,450 C1592,483 1590,583 1600,650 C1610,717 1633,792 1650,850 C1667,908 1688,950 1700,1000 C1712,1050 1722,1110 1720,1150 C1718,1190 1695,1225 1690,1240"/><path d="M1590,450 C1558,475 1443,550 1400,600 C1357,650 1347,700 1330,750 C1313,800 1302,855 1300,900 C1298,945 1310,975 1320,1020 C1330,1065 1353,1145 1360,1170"/><path d="M1360,1170 C1383,1150 1443,1087 1500,1050 C1557,1013 1637,977 1700,950 C1763,923 1850,900 1880,890"/><path d="M1360,1170 C1333,1178 1260,1205 1200,1220 C1140,1235 1067,1242 1000,1260 C933,1278 850,1307 800,1330 C750,1353 717,1388 700,1400"/><path d="M1360,1170 C1383,1177 1445,1198 1500,1210 C1555,1222 1627,1250 1690,1240 C1753,1230 1848,1165 1880,1150"/><path d="M1360,1170 C1367,1192 1390,1258 1400,1300 C1410,1342 1417,1404 1420,1425"/><path d="M270,1250 C250,1225 178,1150 150,1100 C122,1050 122,1000 100,950 C78,900 37,845 20,800 C3,755 3,700 0,680"/><path d="M270,1250 C292,1225 352,1163 400,1100 C448,1037 523,903 560,870 C597,837 613,870 620,900 C627,930 617,1000 600,1050 C583,1100 540,1148 520,1200 C500,1252 487,1333 480,1360"/><path d="M270,1250 C305,1268 408,1335 480,1360 C552,1385 630,1397 700,1400 C770,1403 833,1376 900,1380 C967,1384 1067,1418 1100,1425"/><path d="M0,1300 C17,1292 55,1258 100,1250 C145,1242 242,1250 270,1250"/><path d="M270,1250 L200,1425"/><path d="M450,680 C462,708 502,818 520,850 C538,882 553,867 560,870"/><path d="M600,570 C617,595 675,665 700,720 C725,775 728,853 750,900 C772,947 797,978 830,1000 C863,1022 930,1025 950,1030"/><path d="M830,1000 C827,1025 798,1100 810,1150 C822,1200 885,1254 900,1300 C915,1346 900,1404 900,1425"/><path d="M950,1030 C967,1047 1008,1098 1050,1130 C1092,1162 1175,1205 1200,1220"/><path d="M520,1200 C542,1208 603,1228 650,1250 C697,1272 775,1317 800,1330"/><path d="M450,0 C455,17 488,65 480,100 C472,135 413,192 400,210"/><path d="M1690,1240 C1708,1258 1772,1319 1800,1350 C1828,1381 1850,1412 1860,1425"/></g>
<g fill="none" stroke="#2a3aa0" stroke-width="5"><path d="M340,560 C317,588 245,675 200,730 C155,785 92,863 70,890"/><path d="M740,690 C712,718 627,793 570,860 C513,927 428,1052 400,1090"/><path d="M1210,1010 L1180,1270"/><path d="M60,170 L30,195"/><path d="M130,180 L95,210"/></g>
<g fill="none" stroke="#b8332c" stroke-width="5"><path d="M1080,0 C1068,33 1022,117 1010,200 C998,283 1005,417 1010,500 C1015,583 1028,625 1040,700 C1052,775 1073,908 1080,950"/><path d="M1220,890 C1233,908 1280,972 1300,1000 C1320,1028 1333,1050 1340,1060"/></g>
<g fill="none" stroke="#bb2c27" stroke-width="9" stroke-dasharray="60 14 10 14"><path d="M130,260 C155,278 258,333 280,370 C302,407 223,448 260,480 C297,512 420,525 500,560 C580,595 687,645 740,690 C793,735 777,792 820,830 C863,868 970,905 1000,920"/><path d="M1000,920 L1100,880"/><path d="M1330,1030 C1355,1035 1447,1040 1480,1060 C1513,1080 1522,1135 1530,1150"/></g>
<g fill="none" stroke="#c5302a" stroke-width="15" stroke-linecap="round"><path d="M0,190 C13,195 58,202 80,220 C102,238 110,267 130,300 C150,333 172,383 200,420 C228,457 267,490 300,520 C333,550 367,573 400,600 C433,627 458,655 500,680 C542,705 610,732 650,750 C690,768 723,773 740,790 C757,807 732,832 750,850 C768,868 808,883 850,900 C892,917 950,935 1000,950 C1050,965 1100,978 1150,990 C1200,1002 1272,1002 1300,1020 C1328,1038 1313,1080 1320,1100 C1327,1120 1327,1140 1340,1140 C1353,1140 1378,1107 1400,1100 C1422,1093 1450,1092 1470,1100 C1490,1108 1498,1133 1520,1150 C1542,1167 1570,1178 1600,1200 C1630,1222 1653,1252 1700,1280 C1747,1308 1850,1355 1880,1370"/></g>
<g fill="none" stroke="#161a72" stroke-width="12" stroke-dasharray="54 20"></g>
<g fill="#fff" stroke="#3a3ea8" stroke-width="6"><rect x="325" y="698" width="135" height="62"/><rect x="648" y="988" width="124" height="64"/><rect x="725" y="1215" width="147" height="65"/><rect x="1220" y="1235" width="130" height="60"/><rect x="-10" y="255" width="70" height="65"/></g>
<g fill="#fff" stroke="#c5403a" stroke-width="6"><rect x="298" y="398" width="107" height="44"/><rect x="1105" y="860" width="110" height="48"/><rect x="1690" y="288" width="168" height="74"/></g>
<g font-family="'Liberation Sans',sans-serif" font-size="27" fill="#1a1a1a" font-weight="bold"><text x="425" y="222">Etain</text><text x="825" y="292">Conflans</text><text x="1080" y="52">Briey</text><text x="1110" y="487">Gravelotte</text><text x="775" y="540">Mars La Tour</text><text x="155" y="555">Haudiomont</text><text x="0" y="445">Fresnes</text><text x="240" y="312">Moranville</text><text x="245" y="82">Eix</text><text x="400" y="928">Vigneulles</text><text x="968" y="1042">Thiaucourt</text><text x="868" y="758">Chambley</text><text x="1183" y="972">Pagny</text><text x="1178" y="1050">Vandieres</text><text x="900" y="988">Jaulny</text><text x="912" y="1092">Bouillonville</text><text x="862" y="1172">Essey</text><text x="915" y="1340">Lironville</text><text x="340" y="1397">Apremont</text><text x="1240" y="1372">Dieulouard</text><text x="1395" y="668">Jouy-Aux-</text><text x="1410" y="698">Arches</text><text x="1385" y="848">Marieulles</text><text x="310" y="838">Dommartin-</text><text x="295" y="866">La Montagne</text><text x="125" y="893">Troyon-</text><text x="105" y="925">Sur-Meuse</text><text x="835" y="865">Beaumont-Les-</text><text x="845" y="893">Lachaussee</text><text x="720" y="700">Sponville</text><text x="632" y="635">Burgeville</text><text x="1195" y="570">Rezonville</text><text x="865" y="620">Puxieux</text><text x="50" y="1225">Chaumont</text><text x="750" y="1412">Montsec</text><text x="1120" y="1332">St. Jacques Fme</text><text x="1050" y="1278">Monnuy</text><text x="890" y="1136">Euvezin</text><text x="405" y="932">Hannonville</text><text x="100" y="212">Braquis</text><text x="180" y="368">Warcq</text><text x="520" y="1118">Seicheprey</text></g>
<g font-family="'Liberation Sans',sans-serif" fill="#111" font-weight="bold"><text x="1648" y="473" font-size="28" letter-spacing="2">Metz</text><text x="300" y="1262" font-size="30" letter-spacing="2">St. Mihiel</text><text x="1385" y="1182" font-size="30" letter-spacing="2">Pont-A-Mousson</text></g>
</g>
<ellipse cx="529.8" cy="54.8" rx="7" ry="9" fill="#b8b0ad"/>
<ellipse cx="561.6" cy="314.6" rx="7" ry="8" fill="#b8b0ad"/>
<g><text x="47.6" y="55.9" font-size="6.7" fill="#2b30a8" font-family="'Liberation Sans',sans-serif" font-weight="bold" letter-spacing=".4">Armistice</text><text x="55.6" y="63.8" font-size="6.7" fill="#2b30a8" font-family="'Liberation Sans',sans-serif" font-weight="bold" letter-spacing=".4">Line</text><text x="153.7" y="32.1" font-size="6.3" fill="#c5302a" font-family="'Liberation Sans',sans-serif" font-weight="bold" letter-spacing=".5">CROWN PRINCE</text><text x="25.4" y="135.9" font-size="4.1" fill="#c5302a" font-family="'Liberation Sans',sans-serif" font-weight="bold">1 Nov</text><text x="78.6" y="144.4" font-size="4.1" fill="#c5302a" font-family="'Liberation Sans',sans-serif" font-weight="bold">3 Nov</text><text x="236.8" y="170.5" font-size="4.1" fill="#2b30a8" font-family="'Liberation Sans',sans-serif" font-weight="bold">11 Nov</text><text x="287.0" y="55.9" font-size="8.3" fill="#6a625e" font-family="'Liberation Serif',serif">B</text><text x="356.0" y="55.9" font-size="8.3" fill="#6a625e" font-family="'Liberation Serif',serif">G</text><text x="379.8" y="55.9" font-size="8.3" fill="#6a625e" font-family="'Liberation Serif',serif">I</text><text x="403.7" y="55.9" font-size="8.3" fill="#6a625e" font-family="'Liberation Serif',serif">U</text><text x="427.5" y="55.9" font-size="8.3" fill="#6a625e" font-family="'Liberation Serif',serif">M</text><text x="445.7" y="22.2" font-size="7.9" fill="#5e5854" font-family="'Liberation Sans',sans-serif">L</text><text x="459.2" y="22.2" font-size="7.9" fill="#5e5854" font-family="'Liberation Sans',sans-serif">U</text><text x="472.7" y="22.2" font-size="7.9" fill="#5e5854" font-family="'Liberation Sans',sans-serif">X</text><text x="486.2" y="22.2" font-size="7.9" fill="#5e5854" font-family="'Liberation Sans',sans-serif">E</text><text x="499.7" y="22.2" font-size="7.9" fill="#5e5854" font-family="'Liberation Sans',sans-serif">M</text><text x="513.2" y="22.2" font-size="7.9" fill="#5e5854" font-family="'Liberation Sans',sans-serif">B</text><text x="526.7" y="22.2" font-size="7.9" fill="#5e5854" font-family="'Liberation Sans',sans-serif">O</text><text x="540.2" y="22.2" font-size="7.9" fill="#5e5854" font-family="'Liberation Sans',sans-serif">U</text><text x="553.7" y="22.2" font-size="7.9" fill="#5e5854" font-family="'Liberation Sans',sans-serif">R</text><text x="567.1" y="22.2" font-size="7.9" fill="#5e5854" font-family="'Liberation Sans',sans-serif">G</text><text x="310.0" y="67.0" font-size="6.3" fill="#c5302a" font-family="'Liberation Sans',sans-serif" font-weight="bold" letter-spacing=".5">ALLWITZ</text><text x="307.9" y="67.0" font-size="6.3" fill="#c5302a" font-family="'Liberation Sans',sans-serif" font-weight="bold">G</text><text x="20.6" y="292.1" font-size="4.4" fill="#c5302a" font-family="'Liberation Sans',sans-serif" font-weight="bold">25 Sep</text><text x="96.0" y="265.4" font-size="4.4" fill="#c5302a" font-family="'Liberation Sans',sans-serif" font-weight="bold">3 Oct</text><text x="101.6" y="284.4" font-size="4.8" fill="#c5302a" font-family="'Liberation Sans',sans-serif" font-weight="bold">26 Sep</text><text x="60.0" y="334.0" font-size="5.7" fill="#2b30a8" font-family="'Liberation Sans',sans-serif" font-weight="bold" letter-spacing="1">FOURTH</text><text x="49.5" y="333.7" font-size="4.1" fill="#2b30a8" font-family="'Liberation Sans',sans-serif" font-weight="bold">FR.</text><text x="59.0" y="342.9" font-size="4.1" fill="#2b30a8" font-family="'Liberation Sans',sans-serif" font-weight="bold" letter-spacing="1">GOURAUD</text><text x="168.3" y="328.3" font-size="5.4" fill="#2b30a8" font-family="'Liberation Sans',sans-serif" font-weight="bold">I</text><text x="217.1" y="306.3" font-size="5.4" fill="#2b30a8" font-family="'Liberation Sans',sans-serif" font-weight="bold">V</text><text x="249.5" y="294.3" font-size="5.4" fill="#2b30a8" font-family="'Liberation Sans',sans-serif" font-weight="bold">III</text><text x="238.1" y="353.5" font-size="5.7" fill="#2b30a8" font-family="'Liberation Sans',sans-serif" font-weight="bold" letter-spacing="2">FIRST</text><text x="226.7" y="353.5" font-size="4.1" fill="#2b30a8" font-family="'Liberation Sans',sans-serif" font-weight="bold">U.S.</text><text x="234.9" y="362.2" font-size="4.1" fill="#2b30a8" font-family="'Liberation Sans',sans-serif" font-weight="bold">PERSHING</text><text x="234.9" y="367.0" font-size="4.1" fill="#2b30a8" font-family="'Liberation Sans',sans-serif" font-weight="bold">LIGGETT (16 Oct)</text><text x="272.2" y="424.1" font-size="6.3" fill="#2b30a8" font-family="'Liberation Sans',sans-serif" font-weight="bold" letter-spacing="2">A E F</text><text x="265.9" y="434.9" font-size="6.0" fill="#2b30a8" font-family="'Liberation Sans',sans-serif" font-weight="bold" letter-spacing="1">PERSHING</text><text x="359.2" y="308.6" font-size="4.4" fill="#c5302a" font-family="'Liberation Sans',sans-serif" font-weight="bold">5 Oct</text><text x="487.5" y="382.2" font-size="4.4" fill="#c5302a" font-family="'Liberation Sans',sans-serif" font-weight="bold">5 Oct</text><text x="572.7" y="305.4" font-size="6.3" fill="#c5302a" font-family="'Liberation Sans',sans-serif" font-weight="bold" letter-spacing="1">ALBRECHT</text><text x="426.7" y="440.0" font-size="5.1" fill="#2b30a8" font-family="'Liberation Sans',sans-serif" font-weight="bold">SECOND</text><text x="416.0" y="439.7" font-size="3.8" fill="#2b30a8" font-family="'Liberation Sans',sans-serif" font-weight="bold">U.S.</text><text x="426.7" y="448.3" font-size="4.1" fill="#2b30a8" font-family="'Liberation Sans',sans-serif" font-weight="bold">BULLARD</text><text x="425.1" y="453.0" font-size="3.8" fill="#2b30a8" font-family="'Liberation Sans',sans-serif" font-weight="bold">(Bol. 12 Oct)</text><text x="419.5" y="404.1" font-size="5.1" fill="#2b30a8" font-family="'Liberation Sans',sans-serif" font-weight="bold">IV</text><text x="510.8" y="442.9" font-size="5.1" fill="#2b30a8" font-family="'Liberation Sans',sans-serif" font-weight="bold">VI</text><text x="355.2" y="357.5" font-size="3.8" fill="#2b30a8" font-family="'Liberation Sans',sans-serif" font-weight="bold">FR.</text><text x="300.0" y="288.4" font-size="4.8" fill="#2b30a8" font-family="'Liberation Sans',sans-serif" font-weight="bold">XVII</text><text x="170.6" y="11.4" font-size="3.8" fill="#c5302a" font-family="'Liberation Sans',sans-serif" font-weight="bold" letter-spacing="1.5">xxxxx</text><text x="314.8" y="46.0" font-size="3.8" fill="#c5302a" font-family="'Liberation Sans',sans-serif" font-weight="bold" letter-spacing="1.5">xxxxx</text><text x="582.2" y="284.1" font-size="3.8" fill="#c5302a" font-family="'Liberation Sans',sans-serif" font-weight="bold" letter-spacing="1.5">xxxxx</text><text x="64.3" y="324.9" font-size="3.8" fill="#2b30a8" font-family="'Liberation Sans',sans-serif" font-weight="bold" letter-spacing="1.5">xxxx</text><text x="165.9" y="319.4" font-size="3.8" fill="#2b30a8" font-family="'Liberation Sans',sans-serif" font-weight="bold" letter-spacing="1.5">xxx</text><text x="215.1" y="297.5" font-size="3.8" fill="#2b30a8" font-family="'Liberation Sans',sans-serif" font-weight="bold" letter-spacing="1.5">xxx</text><text x="248.4" y="285.7" font-size="3.8" fill="#2b30a8" font-family="'Liberation Sans',sans-serif" font-weight="bold" letter-spacing="1.5">xxx</text><text x="241.3" y="344.4" font-size="3.8" fill="#2b30a8" font-family="'Liberation Sans',sans-serif" font-weight="bold" letter-spacing="1.5">xxxx</text><text x="273.8" y="414.0" font-size="3.8" fill="#2b30a8" font-family="'Liberation Sans',sans-serif" font-weight="bold" letter-spacing="1.5">xxxxx</text><text x="367.9" y="349.5" font-size="3.8" fill="#2b30a8" font-family="'Liberation Sans',sans-serif" font-weight="bold" letter-spacing="1.5">xxx</text><text x="418.7" y="395.6" font-size="3.8" fill="#2b30a8" font-family="'Liberation Sans',sans-serif" font-weight="bold" letter-spacing="1.5">xxx</text><text x="430.6" y="431.4" font-size="3.8" fill="#2b30a8" font-family="'Liberation Sans',sans-serif" font-weight="bold" letter-spacing="1.5">xxxx</text><text x="510.0" y="434.6" font-size="3.8" fill="#2b30a8" font-family="'Liberation Sans',sans-serif" font-weight="bold" letter-spacing="1.5">xxx</text></g>
</g>
<rect x="10.3" y="401.6" width="130.2" height="65.4" fill="#fff" stroke="#1c1c1c" stroke-width="1.1"/><text x="14.6" y="412.7" font-size="9.52" fill="#151515" font-family="'Liberation Serif',serif" font-weight="bold" textLength="119.8" lengthAdjust="spacingAndGlyphs">SEDAN–VERDUN AND VICINITY</text><text x="12.4" y="425.4" font-size="6.98" fill="#23279a" font-family="'Liberation Sans',sans-serif" font-weight="bold" textLength="119.0" lengthAdjust="spacingAndGlyphs">THE MEUSE-ARGONNE OFFENSIVE</text><text x="20.6" y="434.0" font-size="6.98" fill="#23279a" font-family="'Liberation Sans',sans-serif" font-weight="bold" textLength="103.2" lengthAdjust="spacingAndGlyphs">SEPTEMBER-NOVEMBER 1918</text><text x="54.0" y="445.1" font-size="3.49" fill="#222" font-family="'Liberation Sans',sans-serif" font-weight="bold" textLength="42.1" lengthAdjust="spacingAndGlyphs">ELEVATIONS IN METERS</text><text x="61.1" y="465.1" font-size="3.49" fill="#222" font-family="'Liberation Sans',sans-serif" font-weight="bold" textLength="30.2" lengthAdjust="spacingAndGlyphs">SCALE OF MILES</text><text x="51.6" y="449.2" font-size="3.17" fill="#222" font-family="'Liberation Sans',sans-serif" font-weight="bold">0</text><text x="66.7" y="449.2" font-size="3.17" fill="#222" font-family="'Liberation Sans',sans-serif" font-weight="bold">200</text><text x="80.2" y="449.2" font-size="3.17" fill="#222" font-family="'Liberation Sans',sans-serif" font-weight="bold">500</text><text x="92.9" y="449.2" font-size="3.17" fill="#222" font-family="'Liberation Sans',sans-serif" font-weight="bold">OVER</text><text x="36.2" y="456.2" font-size="3.17" fill="#222" font-family="'Liberation Sans',sans-serif" font-weight="bold">0</text><text x="74.3" y="456.2" font-size="3.17" fill="#222" font-family="'Liberation Sans',sans-serif" font-weight="bold">5</text><text x="113.0" y="456.2" font-size="3.17" fill="#222" font-family="'Liberation Sans',sans-serif" font-weight="bold">10</text><rect x="52.4" y="450.2" width="45.2" height="2.5" fill="none" stroke="#222" stroke-width=".5"/><rect x="52.4" y="450.2" width="14.3" height="2.5" fill="#fdf6f2" stroke="#222" stroke-width=".5"/><rect x="66.7" y="450.2" width="15.9" height="2.5" fill="#f6dccd" stroke="#222" stroke-width=".5"/><rect x="82.5" y="450.2" width="15.1" height="2.5" fill="#f0c0a8" stroke="#222" stroke-width=".5"/><rect x="36.2" y="457.8" width="77.8" height="2.9" fill="none" stroke="#222" stroke-width=".5"/><rect x="36.2" y="457.8" width="9.5" height="2.9" fill="#777" stroke="#222" stroke-width=".5"/><rect x="54.0" y="457.8" width="9.5" height="2.9" fill="#777" stroke="#222" stroke-width=".5"/><line x1="134.6" y1="419.4" x2="134.6" y2="460.6" stroke="#333" stroke-width=".6"/>
<rect x="8.7" y="7.9" width="600.5" height="458.7" fill="none" stroke="#1f1f1f" stroke-width="1.3"/><rect x="1.9" y="1.0" width="614.8" height="473.7" fill="none" stroke="#555" stroke-width=".6"/>
<g stroke="#333" stroke-width=".7"><line x1="125.4" y1="1.0" x2="125.4" y2="7.9"/><line x1="125.4" y1="466.7" x2="125.4" y2="474.6"/><line x1="247.6" y1="1.0" x2="247.6" y2="7.9"/><line x1="247.6" y1="466.7" x2="247.6" y2="474.6"/><line x1="370.0" y1="1.0" x2="370.0" y2="7.9"/><line x1="370.0" y1="466.7" x2="370.0" y2="474.6"/><line x1="492.5" y1="1.0" x2="492.5" y2="7.9"/><line x1="492.5" y1="466.7" x2="492.5" y2="474.6"/><line x1="1.9" y1="119.0" x2="8.7" y2="119.0"/><line x1="609.2" y1="119.0" x2="616.7" y2="119.0"/><line x1="1.9" y1="355.1" x2="8.7" y2="355.1"/><line x1="609.2" y1="355.1" x2="616.7" y2="355.1"/><line x1="609.2" y1="-4.9" x2="616.7" y2="-4.9"/></g>
<g font-family="'Liberation Sans',sans-serif" font-size="5.2" fill="#222" text-anchor="middle" font-weight="bold"><text x="63.2" y="5.6">A</text><text x="63.2" y="473.0">A</text><text x="186.5" y="5.6">B</text><text x="186.5" y="473.0">B</text><text x="308.7" y="5.6">C</text><text x="308.7" y="473.0">C</text><text x="431.4" y="5.6">D</text><text x="431.4" y="473.0">D</text><text x="553.7" y="5.6">E</text><text x="553.7" y="473.0">E</text><text x="5.5" y="63.1">4</text><text x="613.2" y="63.1">4</text><text x="5.5" y="182.2">3</text><text x="613.2" y="182.2">3</text><text x="5.5" y="299.9">2</text><text x="613.2" y="299.9">2</text><text x="5.5" y="418.2">1</text><text x="613.2" y="418.2">1</text></g>
<circle cx="590.2" cy="22.2" r="11.6" fill="#fff" stroke="#1c2379" stroke-width="1"/>
<text x="590.2" y="28.2" text-anchor="middle" font-family="'Liberation Sans',sans-serif" font-weight="bold" font-size="17" fill="#14148c" textLength="19" lengthAdjust="spacingAndGlyphs">22</text>
</g></svg></div>
<div class="cap" style="left:2176px;top:972px"><span class="ln"><a>Sedan</a>–<a>Verdun</a> and vicinity: The Meuse–Argonne</span><span class="ln">offensive, September–November 1918 (<span style="border-bottom:2px dotted #202122">c.</span><span style="margin-left:2px">1938)</span></span></div>
<svg class="mag" style="left:2762px;top:975px" viewBox="0 0 23 17"><rect x="7" y="1" width="15" height="9.5" fill="#fff" stroke="#222" stroke-width="1.6"/><rect x="1" y="7" width="9.5" height="9" fill="#fff" stroke="#222" stroke-width="1.6"/></svg>

<!-- Liggett thumb -->
<div class="thumb" style="left:2342px;top:1106px;width:460px;height:634px"></div>
<div class="img" style="left:2350px;top:1114px;width:444px;height:538px;background:#2a2a2c"><svg width="440" height="534" viewBox="0 0 1246 1512" preserveAspectRatio="none"><g id="A_liggett">
<defs>
<filter id="lb1" x="-30%" y="-30%" width="160%" height="160%"><feGaussianBlur stdDeviation="20"/></filter>
<filter id="lb2" x="-30%" y="-30%" width="160%" height="160%"><feGaussianBlur stdDeviation="8"/></filter>
<filter id="lb3" x="-30%" y="-30%" width="160%" height="160%"><feGaussianBlur stdDeviation="3.5"/></filter>
<filter id="lbig" x="-50%" y="-50%" width="200%" height="200%"><feGaussianBlur stdDeviation="55"/></filter>
<filter id="lgrain" x="0" y="0" width="100%" height="100%"><feTurbulence type="fractalNoise" baseFrequency="0.6" numOctaves="2" seed="5" result="n"/><feColorMatrix in="n" type="matrix" values="0 0 0 0 1  0 0 0 0 1  0 0 0 0 1  1.5 1.5 1.5 0 -1.95"/></filter>
<linearGradient id="lface" x1="0" y1="0" x2="1" y2="0"><stop offset="0" stop-color="#c2c2c2"/><stop offset=".45" stop-color="#bababa"/><stop offset=".8" stop-color="#969696"/><stop offset="1" stop-color="#727272"/></linearGradient>
<clipPath id="lclip"><rect x="0" y="0" width="1246" height="1512"/></clipPath>
</defs>
<rect x="0" y="0" width="1246" height="1512" fill="#2b2b2c"/>
<g clip-path="url(#lclip)">
<g filter="url(#lbig)">
 <path d="M-80,260 L220,240 L380,380 L440,620 L440,870 L200,940 L-80,1070 Z" fill="#dedede"/>
 <ellipse cx="180" cy="620" rx="190" ry="280" fill="#e6e6e6"/>
 <ellipse cx="1060" cy="560" rx="170" ry="260" fill="#444445"/>
 <ellipse cx="1000" cy="90" rx="260" ry="80" fill="#262627"/>
</g>
<g filter="url(#lb1)">
 <ellipse cx="60" cy="10" rx="220" ry="70" fill="#343435"/>
 <ellipse cx="250" cy="60" rx="120" ry="50" fill="#5a5a5b" opacity=".8"/>
</g>
<!-- uniform -->
<g filter="url(#lb3)">
 <path d="M-20,1100 L70,1010 L200,932 L450,862 L620,920 L740,960 L866,852 L1100,900 L1270,966 L1270,1540 L-20,1540 Z" fill="#1e1e20"/>
</g>
<g filter="url(#lb1)">
 <path d="M320,1000 L540,950 L600,1400 L400,1500 Z" fill="#2d2d2f" opacity=".9"/>
 <path d="M700,1000 L960,980 L1000,1250 L760,1350 Z" fill="#29292b" opacity=".9"/>
 <path d="M1100,1040 L1246,1080 L1246,1400 L1130,1300 Z" fill="#38383a" opacity=".8"/>
 <path d="M0,1120 L120,1050 L200,1300 L0,1400 Z" fill="#2a2a2c" opacity=".8"/>
</g>
<path d="M622,930 L630,1300" stroke="#0f0f11" stroke-width="7" fill="none" filter="url(#lb3)"/>
<!-- collar -->
<g filter="url(#lb3)">
 <path d="M442,850 L476,768 L620,848 L832,768 L866,852 L740,962 L620,922 L480,932 Z" fill="#202022"/>
 <path d="M476,764 L540,815 L620,842 L720,815 L832,764" stroke="#ededed" stroke-width="7" fill="none"/>
 <path d="M620,846 L628,940" stroke="#3c3c3e" stroke-width="5" fill="none"/>
</g>
<g font-family="'Liberation Sans',sans-serif" font-weight="bold" font-size="58" fill="#c9c9c9" stroke="#8a8a8a" stroke-width="1">
 <text x="506" y="898" transform="rotate(16 506 898)" textLength="66" lengthAdjust="spacingAndGlyphs">U.S.</text>
 <text x="684" y="908" transform="rotate(-13 684 908)" textLength="82" lengthAdjust="spacingAndGlyphs">U.S.</text>
</g>
<!-- face -->
<g filter="url(#lb3)">
 <path d="M388,380 L520,372 L700,368 L860,375 L862,480 L850,600 L830,700 L812,768 L720,812 L620,840 L540,812 L478,762 L455,640 L430,600 L395,520 Z" fill="url(#lface)"/>
</g>
<g filter="url(#lb1)">
 <ellipse cx="650" cy="420" rx="150" ry="40" fill="#d4d4d4" opacity=".8"/>
 <ellipse cx="560" cy="580" rx="70" ry="70" fill="#cfcfcf" opacity=".8"/>
 <ellipse cx="680" cy="740" rx="100" ry="50" fill="#cdcdcd" opacity=".7"/>
 <ellipse cx="820" cy="600" rx="45" ry="150" fill="#6c6c6c" opacity=".8"/>
 <ellipse cx="520" cy="720" rx="50" ry="60" fill="#a0a0a0" opacity=".6"/>
</g>
<g filter="url(#lb3)">
 <path d="M385,380 L470,372 L480,440 L470,520 L430,540 L398,470 Z" fill="#c8c8c8"/>
 <path d="M380,480 L430,470 L450,600 L420,610 L395,560 Z" fill="#a6a6a6"/>
 <path d="M395,500 L425,495 L432,570 L410,575 Z" fill="#6c6c6c"/>
 <path d="M560,440 L600,425 L650,435 L660,470 L610,485 L565,475 Z" fill="#5c5c5c"/>
 <path d="M735,440 L790,428 L830,440 L832,475 L780,488 L740,476 Z" fill="#585858"/>
 <path d="M540,420 L660,400 L670,420 L550,440 Z M730,408 L840,412 L842,432 L735,428 Z" fill="#8c8c8c"/>
 <path d="M660,480 L720,470 L750,520 L765,575 L740,595 L690,600 L650,580 L660,530 Z" fill="#cdcdcd"/>
 <path d="M655,585 L700,600 L765,580 L760,600 L700,615 L660,605 Z" fill="#7e7e7e"/>
 <path d="M598,655 L640,615 L700,600 L770,615 L820,660 L790,655 L710,640 L650,655 L610,680 Z" fill="#dedede"/>
 <path d="M640,660 L710,645 L790,660 L780,690 L710,680 L650,690 Z" fill="#858585"/>
</g>
<!-- hat -->
<g filter="url(#lb3)">
 <path d="M290,232 C300,130 450,50 620,36 C790,30 920,90 926,150 C928,200 890,240 872,330 L870,390 L390,400 C380,330 300,300 290,232 Z" fill="#1c1c1e"/>
 <path d="M340,180 C400,100 520,70 600,70 L560,200 L380,290 Z" fill="#2e2e30"/>
 <path d="M376,300 L470,255 L590,215 L590,250 L480,285 L400,345 Z" fill="#a8a8a8"/>
 <path d="M760,212 L820,205 L852,250 L862,300 L800,275 L765,240 Z" fill="#a5a5a5"/>
 <path d="M400,315 L600,258 L860,290 L862,310 L600,285 L405,345 Z" fill="#bcbcbc"/>
 <path d="M420,345 L600,300 L870,318 L876,360 L640,345 L440,368 Z" fill="#9d9d9d"/>
 <path d="M386,372 L520,356 L700,350 L876,362 L870,385 L700,374 L520,380 L392,400 Z" fill="#161618"/>
 <path d="M596,110 L640,90 L670,65 L700,70 L720,95 L760,100 L770,180 L740,225 L690,238 L640,225 L600,190 Z" fill="#bebebe"/>
 <circle cx="682" cy="92" r="26" fill="#d9d9d9"/><circle cx="682" cy="92" r="12" fill="#6a6a6a"/>
 <path d="M660,140 L700,135 L705,200 L685,225 L665,200 Z" fill="#7a7a7a"/>
 <path d="M600,120 L650,150 L640,200 L605,185 Z M765,115 L715,150 L725,200 L765,180 Z" fill="#dcdcdc"/>
</g>
<!-- straps, buttons, ribbon -->
<g filter="url(#lb3)">
 <path d="M75,985 L190,920 L205,975 L100,1045 L80,1040 Z" fill="#b4b4b4"/><path d="M108,985 L172,950 L180,985 L118,1020 Z" fill="#3a3a3c"/>
 <path d="M1118,902 L1226,940 L1212,1000 L1102,962 Z" fill="#dedede"/><path d="M1146,928 L1200,946 L1192,976 L1138,958 Z" fill="#8a8a8a"/>
 <circle cx="268" cy="1025" r="30" fill="#c6c6c6"/><circle cx="275" cy="1112" r="28" fill="#bdbdbd"/>
 <circle cx="1012" cy="1003" r="31" fill="#d4d4d4"/><circle cx="1011" cy="1083" r="30" fill="#d0d0d0"/>
 <circle cx="255" cy="1370" r="28" fill="#b4b4b4"/><circle cx="267" cy="1476" r="30" fill="#b9b9b9"/>
 <circle cx="268" cy="1025" r="14" fill="#e0e0e0"/><circle cx="1012" cy="1003" r="15" fill="#e6e6e6"/><circle cx="1011" cy="1083" r="15" fill="#e4e4e4"/>
 <rect x="745" y="1236" width="195" height="26" fill="#8b8b8b"/><rect x="840" y="1236" width="12" height="26" fill="#d8d8d8"/><rect x="868" y="1236" width="34" height="26" fill="#b9b9b9"/>
</g>
<rect x="0" y="0" width="1246" height="1512" filter="url(#lgrain)" opacity=".07"/>
</g>
</g></svg></div>
<div class="cap" style="left:2356px;top:1657.7px"><span class="ln">Lieutenant General <a>Hunter Liggett</a>,</span><span class="ln">commanding the <a>U.S. First Army</a></span></div>

<!-- content scrolled above the visible area (appears in the screenshot preview) -->
<div class="p" style="left:901px;top:-416px"><span class="ln">among the Allies and sharply dimmed German hopes for victory.</span></div>
<div class="p" style="left:402px;top:-360px"><span class="ln">The Meuse–Argonne battle was the largest frontline commitment of troops by the U.S. Army in World War I, and also its deadliest. Command</span><span class="ln">was coordinated, with some U.S. troops (e.g. the <a>Buffalo Soldiers</a> of the <a>92nd Division</a> and the <a>93rd Division</a>) attached and serving under</span><span class="ln">French command (e.g. XVII Corps during the second phase).</span></div>
<div class="h2" style="left:402px;top:-186px">Prelude<span class="ed">[ <a>edit</a> ]</span></div>
<div class="abs" style="left:402px;top:-129px;width:1732px;height:2px;background:#a2a9b1"></div>
<div class="p" style="left:448px;top:-119px;font-style:italic"><span class="ln">Main article: <a>Hundred Days Offensive</a></span></div>
<div class="h3" style="left:402px;top:-43px">Opposing forces<span class="ed">[ <a>edit</a> ]</span></div>
<div class="p" style="left:448px;top:10px;font-style:italic"><span class="ln">Further information: <a>American order of battle Meuse–Argonne offensive</a></span></div>
<div class="cap" style="left:2190px;top:-415px;line-height:36px"><span class="ln"><span style="display:inline-block;width:46px;height:26px;margin-right:14px;vertical-align:-4px;background:linear-gradient(#b22234 0 15%,#fff 15% 30%,#b22234 30% 45%,#fff 45% 60%,#b22234 60% 75%,#fff 75% 90%,#b22234 90%)"></span>120,000</span><span class="ln">26,277 killed</span><span class="ln">95,786 wounded</span><span class="ln"><span style="display:inline-block;width:40px;height:26px;margin-right:14px;vertical-align:-4px;background:linear-gradient(90deg,#0055a4 33%,#fff 33% 66%,#ef4135 66%)"></span>70,000 casualties</span><span class="ln"><span style="display:inline-block;width:40px;height:26px;margin-right:14px;vertical-align:-4px;background:linear-gradient(#a51931 0 33%,#f4f5f8 33% 66%,#a51931 66%)"></span>19 killed<sup style="font-size:18px"><a>[7]</a></sup></span></div>
<div class="cap" style="left:2500px;top:-415px;line-height:36px"><span class="ln">56,000 wounded</span><span class="ln">26,000 POWs taken by</span><span class="ln">Americans</span><span class="ln">30,000 POWs taken by</span><span class="ln">French</span><span class="ln">874 artillery pieces</span><span class="ln">captured by both<sup style="font-size:18px"><a>[7]</a></sup></span></div>

</div>
<div class="sbthumb" style="top:658px;height:256px"></div>
<div class="preview"><div class="pvin"><div class="view">
<div class="doc" style="top:559px">
<div class="leftpanel"></div><div class="leftline"></div>
<div class="sbtrack"></div>


<div class="abs" style="left:2174px;top:-700px;width:628px;height:1064px;background:#f8f9fa;border:2px solid #a2a9b1"></div>
<div class="abs" style="left:2268px;top:-130px;width:440px;height:421px;overflow:hidden;background:#c6e4f6"><svg width="440" height="421" viewBox="569 -847 1330 1274" preserveAspectRatio="none" style="position:absolute;left:0;top:0"><use href="#A_france"/></svg></div>
<div class="abs" style="left:2271px;top:295px;font-size:22.1px;line-height:34px;color:#000;white-space:nowrap">Location within France</div>
<svg class="mag" style="left:2678px;top:299px" viewBox="0 0 23 17"><rect x="7" y="1" width="15" height="9.5" fill="#fff" stroke="#222" stroke-width="1.6"/><rect x="1" y="7" width="9.5" height="9" fill="#fff" stroke="#222" stroke-width="1.6"/></svg>


<div class="abs" style="left:2174px;top:377px;width:628px;height:72px;background:#f8f9fa;border:2px solid #a2a9b1"></div>
<div class="abs" style="left:2182px;top:385px;width:612px;height:56px;background:#c8d4ec"></div>
<div class="abs" style="left:2206px;top:399px;font-size:18.5px;line-height:26px;white-space:nowrap;letter-spacing:2.2px;color:#202122"><a>V</a><b style="font-size:21px;position:relative;top:-1.5px;letter-spacing:.5px">·</b><a>T</a><b style="font-size:21px;position:relative;top:-1.5px;letter-spacing:.5px">·</b><a>E</a></div>
<div class="abs" style="left:2326px;top:393.4px;font-size:27.95px;font-weight:bold;line-height:40px;white-space:nowrap"><a>Hundred Days Offensive</a></div>
<div class="abs" style="left:2694px;top:391px;font-size:24.64px;line-height:36px;white-space:nowrap;color:#202122">[<a>show</a>]</div>


<div class="p" style="left:402px;top:68px"><span class="ln">The American forces initially consisted of 15 divisions of the <a>U.S. First Army</a> commanded by General <a>John J. Pershing</a> until October 16 and</span><span class="ln">then by Lieutenant General <a>Hunter Liggett</a>.<sup><a>[8]</a></sup> The logistics were planned and directed by then Colonel George C. Marshall. The French</span><span class="ln">forces next to them consisted of 31 divisions, including the <a>Fourth Army</a> (under <a>Henri Gouraud</a>) and the <a>Fifth Army</a> (under <a>Henri Mathias</a></span><span class="ln"><a>Berthelot</a>).<sup><a>[9]</a></sup> The U.S. divisions of the AEF were oversized (12 <a>battalions</a> per division versus the French-British-German nine battalions per</span><span class="ln">division), being up to twice the size of other Allies' battle-depleted divisions upon arrival, but the French and other Allied divisions had been</span><span class="ln">partly replenished prior to the Grand Offensive, so both the U.S. and French contributions in troops were considerable. All of the heavy</span><span class="ln">equipment (tanks, artillery, and aircraft) was provided by the Allies (mainly by the French Army). For the Meuse–Argonne front alone, this</span><span class="ln">represented 2,780 artillery pieces, 380 tanks, and 840 planes.</span></div>


<div class="thumb" style="left:402px;top:476px;width:460px;height:817px"></div>
<div class="img" style="left:410px;top:484px;width:444px;height:687px;background:#3b3a2b"><svg width="440" height="683" viewBox="0 0 975 1514" preserveAspectRatio="none"><use href="#A_pershing"/></svg></div>
<div class="cap" style="left:416px;top:1176px"><span class="ln">General <a>John J. Pershing</a>,</span><span class="ln">Commander-in-Chief of the <a class="v">American</a></span><span class="ln"><a class="v">Expeditionary Forces</a> (AEF).</span></div>
<svg class="mag" style="left:822px;top:1179px" viewBox="0 0 23 17"><rect x="7" y="1" width="15" height="9.5" fill="#fff" stroke="#222" stroke-width="1.6"/><rect x="1" y="7" width="9.5" height="9" fill="#fff" stroke="#222" stroke-width="1.6"/></svg>


<div class="thumb" style="left:402px;top:1344px;width:460px;height:520px"></div>
<div class="img" style="left:410px;top:1352px;width:444px;height:500px;background:#6f7074"><svg width="440" height="446" viewBox="0 0 1492 1512" preserveAspectRatio="none"><use href="#A_general2"/></svg></div>


<div class="p" style="left:901px;top:434px"><span class="ln">Concerning armored support, the 35th Division was completed by the 1st Tank Brigade (under</span><span class="ln"><a>George S. Patton</a>) with 127 American-crewed Renault FT light <a>tank</a> and 28 French-crewed</span><span class="ln">Schneider medium tanks. The 3d US Tank brigade with 250 French-crewed tank was also involved</span><span class="ln">supporting the V Corps. The 37th and 79th Division were augmented with a French tank regiment</span><span class="ln">(Renault FT light tank) and 2 groups of medium tank (St-Chamond). The 91st Division was</span><span class="ln">augmented with an equivalent force (1 light tank regiment and 2 groups medium tank).</span></div>

<div class="p" style="left:901px;top:712px"><span class="ln">As the battle progressed, both the Americans and the French brought in reinforcements.</span><span class="ln">Eventually, 22 American divisions participated in the battle at one time or another, representing</span><span class="ln">two full field armies.<sup><a>[10]</a></sup> Other French forces involved included the <a>2nd Colonial Corps</a>, under <a>Henri</a></span><span class="ln"><a>Claudel</a>, which had also fought alongside the AEF at the <a class="v">Battle of Saint-Mihiel</a> earlier in September</span><span class="ln">1918.</span></div>

<div class="p" style="left:901px;top:946px"><span class="ln">The opposing forces were wholly German. During this period of the war, German divisions</span><span class="ln">procured only 50 percent or less of their initial strength. The 117th Division, which opposed the</span><span class="ln">U.S. 79th Division during the offensive's first phase, had only 3,300 men in its ranks. Morale varied</span><span class="ln">among German units. For example, divisions that served on the Eastern front had high morale, while conversely</span><span class="ln">divisions that had been on the Western front had poor morale. Resistance grew to approximately 200,000–</span><span class="ln">450,000 German troops from the <a>Fifth Army</a> of <a>Group Gallwitz</a> commanded by General <a>Georg von der Marwitz</a>.</span><span class="ln">The Americans estimated that they opposed parts of 44 German divisions overall, though many fewer at any one</span><span class="ln">time.</span></div>

<div class="h3" style="left:901px;top:1329px">Objective<span class="ed">[ <a>edit</a> ]</span></div>
<div class="p" style="left:901px;top:1396px"><span class="ln">The Allied objective was the capture of the <a>railway</a> hub at <a>Sedan</a> that would break the railway network supporting</span><span class="ln">the German Army in France and <a>Flanders</a>.</span></div>

<div class="h2" style="left:901px;top:1526px">Battle<span class="ed">[ <a>edit</a> ]</span></div>
<div class="abs" style="left:901px;top:1582px;width:1402px;height:2px;background:#a2a9b1"></div>

<div class="h3" style="left:901px;top:1611px">First phase (September 26 – October 4, 1918)<span class="ed">[ <a>edit</a> ]</span></div>
<div class="p" style="left:901px;top:1679px"><span class="ln">"During the three hours preceding H hour, the <a>Allies</a> expended more ammunition than both sides managed to fire</span><span class="ln">throughout the four years of the <a>[American] Civil War</a>. The cost was later calculated to have been $180 million, or</span><span class="ln">$1 million per minute (about $3.5 billion in 2022 dollars)."<sup><a>[11]</a></sup> The American attack began at 05:30 on September</span></div>


<div class="thumb" style="left:2162px;top:475px;width:640px;height:580px"></div>
<div class="img" style="left:2170px;top:483px;width:624px;height:483px;background:#f4d3c1"><svg width="620" height="480" viewBox="0 0 620 480" preserveAspectRatio="none"><use href="#A_sedanmap"/></svg></div>
<div class="cap" style="left:2176px;top:972px"><span class="ln"><a>Sedan</a>–<a>Verdun</a> and vicinity: The Meuse–Argonne</span><span class="ln">offensive, September–November 1918 (<span style="border-bottom:2px dotted #202122">c.</span><span style="margin-left:2px">1938)</span></span></div>
<svg class="mag" style="left:2762px;top:975px" viewBox="0 0 23 17"><rect x="7" y="1" width="15" height="9.5" fill="#fff" stroke="#222" stroke-width="1.6"/><rect x="1" y="7" width="9.5" height="9" fill="#fff" stroke="#222" stroke-width="1.6"/></svg>


<div class="thumb" style="left:2342px;top:1106px;width:460px;height:634px"></div>
<div class="img" style="left:2350px;top:1114px;width:444px;height:538px;background:#2a2a2c"><svg width="440" height="534" viewBox="0 0 1246 1512" preserveAspectRatio="none"><use href="#A_liggett"/></svg></div>
<div class="cap" style="left:2356px;top:1657.7px"><span class="ln">Lieutenant General <a>Hunter Liggett</a>,</span><span class="ln">commanding the <a>U.S. First Army</a></span></div>


<div class="p" style="left:901px;top:-416px"><span class="ln">among the Allies and sharply dimmed German hopes for victory.</span></div>
<div class="p" style="left:402px;top:-360px"><span class="ln">The Meuse–Argonne battle was the largest frontline commitment of troops by the U.S. Army in World War I, and also its deadliest. Command</span><span class="ln">was coordinated, with some U.S. troops (e.g. the <a>Buffalo Soldiers</a> of the <a>92nd Division</a> and the <a>93rd Division</a>) attached and serving under</span><span class="ln">French command (e.g. XVII Corps during the second phase).</span></div>
<div class="h2" style="left:402px;top:-186px">Prelude<span class="ed">[ <a>edit</a> ]</span></div>
<div class="abs" style="left:402px;top:-129px;width:1732px;height:2px;background:#a2a9b1"></div>
<div class="p" style="left:448px;top:-119px;font-style:italic"><span class="ln">Main article: <a>Hundred Days Offensive</a></span></div>
<div class="h3" style="left:402px;top:-43px">Opposing forces<span class="ed">[ <a>edit</a> ]</span></div>
<div class="p" style="left:448px;top:10px;font-style:italic"><span class="ln">Further information: <a>American order of battle Meuse–Argonne offensive</a></span></div>
<div class="cap" style="left:2190px;top:-415px;line-height:36px"><span class="ln"><span style="display:inline-block;width:46px;height:26px;margin-right:14px;vertical-align:-4px;background:linear-gradient(#b22234 0 15%,#fff 15% 30%,#b22234 30% 45%,#fff 45% 60%,#b22234 60% 75%,#fff 75% 90%,#b22234 90%)"></span>120,000</span><span class="ln">26,277 killed</span><span class="ln">95,786 wounded</span><span class="ln"><span style="display:inline-block;width:40px;height:26px;margin-right:14px;vertical-align:-4px;background:linear-gradient(90deg,#0055a4 33%,#fff 33% 66%,#ef4135 66%)"></span>70,000 casualties</span><span class="ln"><span style="display:inline-block;width:40px;height:26px;margin-right:14px;vertical-align:-4px;background:linear-gradient(#a51931 0 33%,#f4f5f8 33% 66%,#a51931 66%)"></span>19 killed<sup style="font-size:18px"><a>[7]</a></sup></span></div>
<div class="cap" style="left:2500px;top:-415px;line-height:36px"><span class="ln">56,000 wounded</span><span class="ln">26,000 POWs taken by</span><span class="ln">Americans</span><span class="ln">30,000 POWs taken by</span><span class="ln">French</span><span class="ln">874 artillery pieces</span><span class="ln">captured by both<sup style="font-size:18px"><a>[7]</a></sup></span></div>

</div>
<div class="sbthumb" style="top:568px;height:250px"></div>
<div class="npv"><div class="abs" style="left:8px;top:8px;width:288px;height:180px;background:#f4f4f5;outline:1px solid #888"><div class="abs" style="left:0;top:16px;width:288px;height:164px;background:#fff"></div><div class="abs" style="left:0;top:16px;width:35px;height:164px;background:#f0f0f0"></div><div class="abs" style="left:41px;top:70px;width:44px;height:68px;background:#6b6854"></div><div class="abs" style="left:217px;top:20px;width:62px;height:60px;background:#e8eef2"></div><div class="abs" style="left:217px;top:88px;width:62px;height:48px;background:#f0cbb8"></div><div class="abs" style="left:236px;top:146px;width:44px;height:34px;background:#333"></div><div class="abs" style="left:92px;top:30px;width:118px;height:140px;background:repeating-linear-gradient(#fff 0 2.4px,#9a9a9a 2.4px 4.4px);opacity:.55"></div></div></div>
<div class="toolbar">
  
  <svg class="ic" style="left:40px;top:33px" width="44" height="36" viewBox="0 0 44 36"><rect x="3.5" y="4.5" width="35.6" height="27" rx="4.6" fill="none" stroke="#606062" stroke-width="3"/><line x1="16.5" y1="5" x2="16.5" y2="31" stroke="#606062" stroke-width="2.6"/><g stroke="#606062" stroke-width="2" stroke-linecap="round"><line x1="8" y1="11" x2="12" y2="11"/><line x1="8" y1="15.5" x2="12" y2="15.5"/><line x1="8" y1="20" x2="12" y2="20"/></g></svg>
  <div class="abs" style="left:94px;top:34px;width:2px;height:36px;background:#e0e0e2"></div>
  <svg class="ic" style="left:105px;top:44px" width="18" height="14" viewBox="0 0 18 14"><polyline points="3,4 9,10 15,4" fill="none" stroke="#6a6a6c" stroke-width="3" stroke-linecap="round" stroke-linejoin="round"/></svg>
  <svg class="ic" style="left:170px;top:34px" width="22" height="34" viewBox="0 0 22 34"><polyline points="18,4 5,17 18,30" fill="none" stroke="#5a5a5c" stroke-width="3.2" stroke-linecap="round" stroke-linejoin="round"/></svg>
  <svg class="ic" style="left:243px;top:34px" width="22" height="34" viewBox="0 0 22 34"><polyline points="4,4 17,17 4,30" fill="none" stroke="#b4b4b6" stroke-width="3.2" stroke-linecap="round" stroke-linejoin="round"/></svg>
  
  <svg class="ic" style="left:795.5px;top:33.5px" width="31" height="36" viewBox="0 0 32 37"><path d="M16 2.5 C11 5,7 6,3.5 6.6 V18 C3.5 26,9 31,16 34.5 C23 31,28.5 26,28.5 18 V6.6 C25 6,21 5,16 2.5Z" fill="none" stroke="#5f5f61" stroke-width="2.6" stroke-linejoin="round"/><path d="M16 2.5 C11 5,7 6,3.5 6.6 V18 C3.5 26,9 31,16 34.5Z" fill="#5f5f61"/></svg>
  <div class="url"></div>
  
  <svg class="ic" style="left:875px;top:38px" width="22.5" height="27" viewBox="0 0 24 29"><rect x="2.2" y="2.2" width="19.6" height="24.6" rx="3.2" fill="none" stroke="#707072" stroke-width="1.9"/><g stroke="#707072" stroke-width="1.8"><line x1="6" y1="8" x2="18" y2="8"/><line x1="6" y1="12.3" x2="18" y2="12.3"/><line x1="6" y1="16.6" x2="12" y2="16.6"/></g></svg>
  
  <svg class="ic" style="left:1329px;top:40px" width="18" height="25" viewBox="0 0 18 25"><path d="M4.2 11 V6.6 a4.8 4.8 0 0 1 9.6 0 V11" fill="none" stroke="#9b9b9d" stroke-width="2.2"/><rect x="1" y="10.5" width="16" height="13.5" rx="2.6" fill="#9b9b9d"/></svg>
  <div class="urltxt">en.wikipedia.org</div>
  
  <svg class="ic" style="left:1985px;top:35px" width="26" height="30" viewBox="0 0 26 30"><path d="M21.9 16.6 A9.4 9.4 0 1 1 12.5 7.2 H17" fill="none" stroke="#727274" stroke-width="2" stroke-linecap="round"/><polyline points="13.2,2.3 18,7.2 13.2,12" fill="none" stroke="#727274" stroke-width="2" stroke-linecap="round" stroke-linejoin="round"/></svg>
  
  <svg class="ic" style="left:2581px;top:32px" width="38" height="38" viewBox="0 0 38 38"><circle cx="19" cy="19" r="15.3" fill="none" stroke="#5f5f61" stroke-width="2.8"/><g fill="none" stroke="#5f5f61" stroke-width="2.8" stroke-linecap="round" stroke-linejoin="round"><line x1="19" y1="11" x2="19" y2="26"/><polyline points="12.8,20.2 19,26.4 25.2,20.2"/></g></svg>
  
  <svg class="ic" style="left:2658px;top:29px" width="34" height="41" viewBox="0 0 34 41"><g fill="none" stroke="#5f5f61" stroke-width="2.8" stroke-linecap="round" stroke-linejoin="round"><path d="M11 15.5 H7.5 a4 4 0 0 0 -4 4 V33.5 a4 4 0 0 0 4 4 H26.5 a4 4 0 0 0 4 -4 V19.5 a4 4 0 0 0 -4 -4 H23"/><line x1="17" y1="3.2" x2="17" y2="24.5"/><polyline points="11.2,8.8 17,3 22.8,8.8"/></g></svg>
  
  <svg class="ic" style="left:2732px;top:35px" width="32" height="32" viewBox="0 0 32 32"><g stroke="#5f5f61" stroke-width="3" stroke-linecap="round"><line x1="3.5" y1="15.6" x2="28.5" y2="15.6"/><line x1="16" y1="3.2" x2="16" y2="28"/></g></svg>
  
  <svg class="ic" style="left:2804px;top:31px" width="40" height="40" viewBox="0 0 40 40"><g fill="none" stroke="#5f5f61" stroke-width="2.9" stroke-linejoin="round"><path d="M10.5 27 H8 a4.5 4.5 0 0 1 -4.5 -4.5 V8 a4.5 4.5 0 0 1 4.5 -4.5 H22.5 a4.5 4.5 0 0 1 4.5 4.5 V10.5"/><rect x="11.5" y="11.5" width="24.5" height="24.5" rx="4.5"/></g></svg>
</div>
<div class="tabbar">
  <div class="tab1"></div>
  <svg class="ic" style="left:641px;top:14px" width="28" height="28" viewBox="0 0 28 28"><circle cx="14" cy="14" r="11.7" fill="none" stroke="#626264" stroke-width="2.1"/><path d="M19.6 8.4 L12.2 12.2 L8.4 19.6 L15.8 15.8Z" fill="#626264"/><circle cx="14" cy="14" r="1.4" fill="#e3e3e5"/></svg>
  <div class="tabtxt" style="left:681px;top:14.2px;color:#58585a;letter-spacing:.35px">World War I</div>
  <div class="abs" style="left:1941px;top:13px;width:32px;height:32px;border-radius:7px;background:#fff;font-family:'Liberation Serif',serif;font-size:31px;line-height:33px;text-align:center;color:#111;letter-spacing:-2px;text-indent:-2px;-webkit-text-stroke:.3px">W</div>
  <div class="tabtxt" style="left:1984px;top:14.2px;color:#3a3a3c;letter-spacing:.58px">Meuse–Argonne offensive - Wikipedia</div>
</div>

</div></div></div>
</div>
<div class="toolbar">
  <!-- sidebar -->
  <svg class="ic" style="left:40px;top:33px" width="44" height="36" viewBox="0 0 44 36"><rect x="3.5" y="4.5" width="35.6" height="27" rx="4.6" fill="none" stroke="#606062" stroke-width="3"/><line x1="16.5" y1="5" x2="16.5" y2="31" stroke="#606062" stroke-width="2.6"/><g stroke="#606062" stroke-width="2" stroke-linecap="round"><line x1="8" y1="11" x2="12" y2="11"/><line x1="8" y1="15.5" x2="12" y2="15.5"/><line x1="8" y1="20" x2="12" y2="20"/></g></svg>
  <div class="abs" style="left:94px;top:34px;width:2px;height:36px;background:#e0e0e2"></div>
  <svg class="ic" style="left:105px;top:44px" width="18" height="14" viewBox="0 0 18 14"><polyline points="3,4 9,10 15,4" fill="none" stroke="#6a6a6c" stroke-width="3" stroke-linecap="round" stroke-linejoin="round"/></svg>
  <svg class="ic" style="left:170px;top:34px" width="22" height="34" viewBox="0 0 22 34"><polyline points="18,4 5,17 18,30" fill="none" stroke="#5a5a5c" stroke-width="3.2" stroke-linecap="round" stroke-linejoin="round"/></svg>
  <svg class="ic" style="left:243px;top:34px" width="22" height="34" viewBox="0 0 22 34"><polyline points="4,4 17,17 4,30" fill="none" stroke="#b4b4b6" stroke-width="3.2" stroke-linecap="round" stroke-linejoin="round"/></svg>
  <!-- shield -->
  <svg class="ic" style="left:795.5px;top:33.5px" width="31" height="36" viewBox="0 0 32 37"><path d="M16 2.5 C11 5,7 6,3.5 6.6 V18 C3.5 26,9 31,16 34.5 C23 31,28.5 26,28.5 18 V6.6 C25 6,21 5,16 2.5Z" fill="none" stroke="#5f5f61" stroke-width="2.6" stroke-linejoin="round"/><path d="M16 2.5 C11 5,7 6,3.5 6.6 V18 C3.5 26,9 31,16 34.5Z" fill="#5f5f61"/></svg>
  <div class="url"></div>
  <!-- reader -->
  <svg class="ic" style="left:875px;top:38px" width="22.5" height="27" viewBox="0 0 24 29"><rect x="2.2" y="2.2" width="19.6" height="24.6" rx="3.2" fill="none" stroke="#707072" stroke-width="1.9"/><g stroke="#707072" stroke-width="1.8"><line x1="6" y1="8" x2="18" y2="8"/><line x1="6" y1="12.3" x2="18" y2="12.3"/><line x1="6" y1="16.6" x2="12" y2="16.6"/></g></svg>
  <!-- lock -->
  <svg class="ic" style="left:1329px;top:40px" width="18" height="25" viewBox="0 0 18 25"><path d="M4.2 11 V6.6 a4.8 4.8 0 0 1 9.6 0 V11" fill="none" stroke="#9b9b9d" stroke-width="2.2"/><rect x="1" y="10.5" width="16" height="13.5" rx="2.6" fill="#9b9b9d"/></svg>
  <div class="urltxt">en.wikipedia.org</div>
  <!-- reload -->
  <svg class="ic" style="left:1985px;top:35px" width="26" height="30" viewBox="0 0 26 30"><path d="M21.9 16.6 A9.4 9.4 0 1 1 12.5 7.2 H17" fill="none" stroke="#727274" stroke-width="2" stroke-linecap="round"/><polyline points="13.2,2.3 18,7.2 13.2,12" fill="none" stroke="#727274" stroke-width="2" stroke-linecap="round" stroke-linejoin="round"/></svg>
  <!-- download -->
  <svg class="ic" style="left:2581px;top:32px" width="38" height="38" viewBox="0 0 38 38"><circle cx="19" cy="19" r="15.3" fill="none" stroke="#5f5f61" stroke-width="2.8"/><g fill="none" stroke="#5f5f61" stroke-width="2.8" stroke-linecap="round" stroke-linejoin="round"><line x1="19" y1="11" x2="19" y2="26"/><polyline points="12.8,20.2 19,26.4 25.2,20.2"/></g></svg>
  <!-- share -->
  <svg class="ic" style="left:2658px;top:29px" width="34" height="41" viewBox="0 0 34 41"><g fill="none" stroke="#5f5f61" stroke-width="2.8" stroke-linecap="round" stroke-linejoin="round"><path d="M11 15.5 H7.5 a4 4 0 0 0 -4 4 V33.5 a4 4 0 0 0 4 4 H26.5 a4 4 0 0 0 4 -4 V19.5 a4 4 0 0 0 -4 -4 H23"/><line x1="17" y1="3.2" x2="17" y2="24.5"/><polyline points="11.2,8.8 17,3 22.8,8.8"/></g></svg>
  <!-- plus -->
  <svg class="ic" style="left:2732px;top:35px" width="32" height="32" viewBox="0 0 32 32"><g stroke="#5f5f61" stroke-width="3" stroke-linecap="round"><line x1="3.5" y1="15.6" x2="28.5" y2="15.6"/><line x1="16" y1="3.2" x2="16" y2="28"/></g></svg>
  <!-- tabs -->
  <svg class="ic" style="left:2804px;top:31px" width="40" height="40" viewBox="0 0 40 40"><g fill="none" stroke="#5f5f61" stroke-width="2.9" stroke-linejoin="round"><path d="M10.5 27 H8 a4.5 4.5 0 0 1 -4.5 -4.5 V8 a4.5 4.5 0 0 1 4.5 -4.5 H22.5 a4.5 4.5 0 0 1 4.5 4.5 V10.5"/><rect x="11.5" y="11.5" width="24.5" height="24.5" rx="4.5"/></g></svg>
</div>
<div class="tabbar">
  <div class="tab1"></div>
  <svg class="ic" style="left:641px;top:14px" width="28" height="28" viewBox="0 0 28 28"><circle cx="14" cy="14" r="11.7" fill="none" stroke="#626264" stroke-width="2.1"/><path d="M19.6 8.4 L12.2 12.2 L8.4 19.6 L15.8 15.8Z" fill="#626264"/><circle cx="14" cy="14" r="1.4" fill="#e3e3e5"/></svg>
  <div class="tabtxt" style="left:681px;top:14.2px;color:#58585a;letter-spacing:.35px">World War I</div>
  <div class="abs" style="left:1941px;top:13px;width:32px;height:32px;border-radius:7px;background:#fff;font-family:'Liberation Serif',serif;font-size:31px;line-height:33px;text-align:center;color:#111;letter-spacing:-2px;text-indent:-2px;-webkit-text-stroke:.3px">W</div>
  <div class="tabtxt" style="left:1984px;top:14.2px;color:#3a3a3c;letter-spacing:.58px">Meuse–Argonne offensive - Wikipedia</div>
</div>

</body></html>
